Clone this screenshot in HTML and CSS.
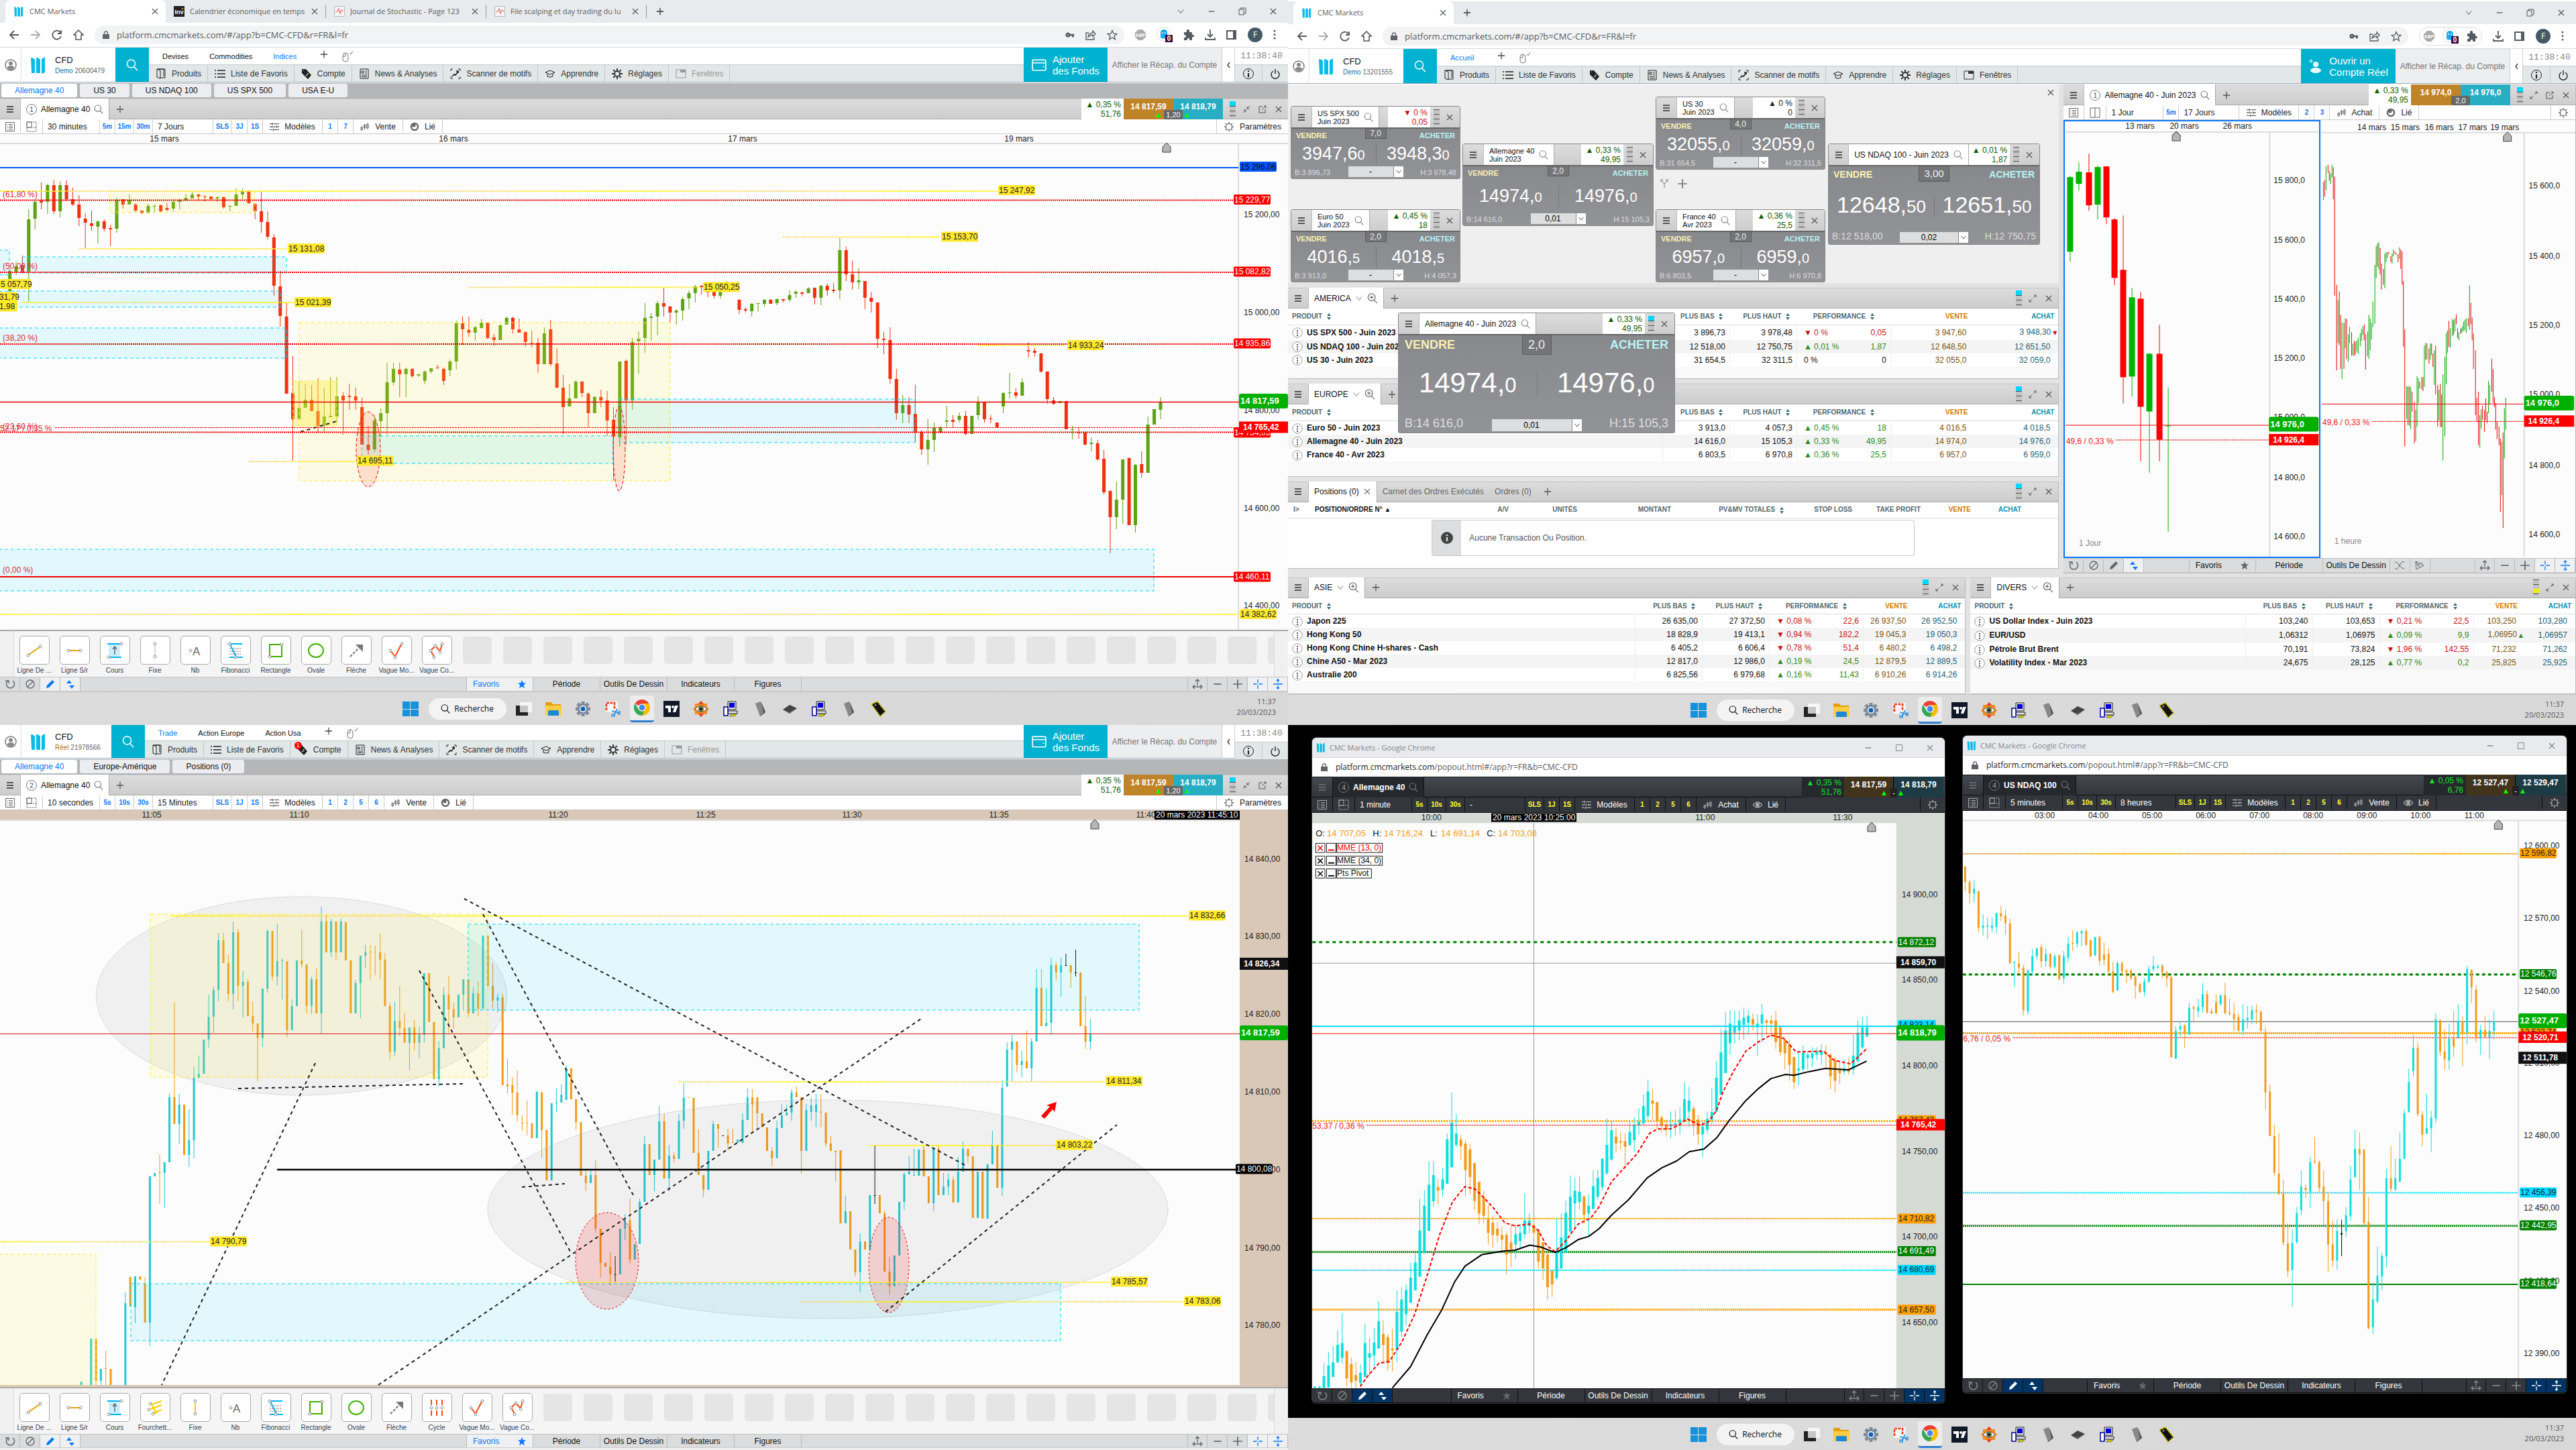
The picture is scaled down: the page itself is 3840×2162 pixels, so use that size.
FILE: index.html
```html
<!DOCTYPE html>
<html lang="fr">
<head>
<meta charset="utf-8">
<title>CMC Markets</title>
<link rel="stylesheet" href="styles.css">
</head>
<body>
<svg class="sprite" aria-hidden="true">
<symbol id="i-logo" viewBox="0 0 22 26"><path fill="#0bbbe8" d="M0 2q4 0 6 3v20H1zM8 2q4 0 6 3v20H8zM16 4l5-3v23l-5 2z"/></symbol>
<symbol id="i-user" viewBox="0 0 18 18"><circle cx="9" cy="9" r="8" fill="none" stroke="#777" stroke-width="1.5"/><circle cx="9" cy="6.500" r="3" fill="#888"/><path fill="#888" d="M3.500 13q1-3 5.500-3t5.500 3q-2 3-5.500 3t-5.500-3z"/></symbol>
<symbol id="i-search" viewBox="0 0 18 18"><path fill="none" stroke="currentColor" stroke-width="1.500" d="M12 12l5 5M13.500 7a6 6 0 1 1-12 0 6 6 0 0 1 12 0z"/></symbol>
<symbol id="i-zoomin" viewBox="0 0 18 18"><path fill="none" stroke="currentColor" stroke-width="1.500" d="M12 12l5 5M13.500 7a6 6 0 1 1-12 0 6 6 0 0 1 12 0zM4.500 7h6M7.500 4v6"/></symbol>
<symbol id="i-plus" viewBox="0 0 14 14"><path stroke="currentColor" stroke-width="1.500" d="M7 1v12M1 7h12"/></symbol>
<symbol id="i-minus" viewBox="0 0 14 14"><path stroke="currentColor" stroke-width="1.500" d="M2 7h10"/></symbol>
<symbol id="i-x" viewBox="0 0 12 12"><path stroke="currentColor" stroke-width="1.200" d="M2 2l8 8M10 2l-8 8"/></symbol>
<symbol id="i-mouse" viewBox="0 0 18 18"><path fill="none" stroke="#777" d="M2 8q0-4 4-4t4 4v5q0 4-4 4t-4-4zM6 4v5H2M12 4l2 2 3-5"/></symbol>
<symbol id="i-prod" viewBox="0 0 16 16"><path fill="none" stroke="#222" d="M2 1l5 2v12l-5-2zM2 1h10v11M4 1h10v13H7"/></symbol>
<symbol id="i-list" viewBox="0 0 16 14"><path stroke="#222" stroke-width="1.500" d="M4 2h12M4 7h12M4 12h12M0 2h2M0 7h2M0 12h2"/></symbol>
<symbol id="i-tag" viewBox="0 0 16 16"><path fill="#222" d="M1 1h6l8 9-5 6-9-9z"/><path stroke="#e2e7e7" fill="none" d="M11 8q-3-1-2 1t-2 2M3 3h1"/></symbol>
<symbol id="i-news" viewBox="0 0 14 16"><path fill="none" stroke="#222" d="M1 1h12v14H1zM3 4h3v3H3zM8 4h3M8 7h3M3 10h8M3 12.500h8"/></symbol>
<symbol id="i-scan" viewBox="0 0 16 16"><path fill="none" stroke="#222" d="M1 4V1h3M12 1h3v3M15 12v3h-3M4 15H1v-3"/><path fill="none" stroke="#222" stroke-width="1.600" d="M3 12l3-3 2 1 4-6M9 4h3v3"/></symbol>
<symbol id="i-grad" viewBox="0 0 16 14"><path fill="none" stroke="#222" d="M8 2l7 3-7 3-7-3zM4 7v4q4 2 8 0V7"/></symbol>
<symbol id="i-gear" viewBox="0 0 16 16"><circle cx="8" cy="8" r="4" fill="none" stroke="currentColor" stroke-width="2"/><path stroke="currentColor" stroke-width="2" d="M8 0v3M8 13v3M0 8h3M13 8h3M2.300 2.300l2 2M11.700 11.700l2 2M2.300 13.700l2-2M11.700 4.300l2-2"/></symbol>
<symbol id="i-gearo" viewBox="0 0 16 16"><circle cx="8" cy="8" r="4.500" fill="none" stroke="currentColor" stroke-width="1.200"/><path stroke="currentColor" stroke-width="1.600" d="M8 1v2M8 13v2M1 8h2M13 8h2M3 3l1.500 1.500M11.500 11.500L13 13M3 13l1.500-1.500M11.500 4.500L13 3"/></symbol>
<symbol id="i-win" viewBox="0 0 16 14"><path fill="none" stroke="currentColor" d="M1 1h14v12H1z"/><path fill="currentColor" d="M7 1h8v4H7z"/></symbol>
<symbol id="i-wallet" viewBox="0 0 20 16"><path fill="none" stroke="#fff" stroke-width="1.500" d="M1 2q0-1 1-1h16q1 0 1 1v12q0 1-1 1H2q-1 0-1-1zM1 5h18M15 10h2"/></symbol>
<symbol id="i-adduser" viewBox="0 0 20 22"><path fill="none" stroke="#fff" d="M3 0v6M0 3h6"/><circle cx="10" cy="8" r="4" fill="#e9fbff"/><ellipse cx="10" cy="17" rx="8" ry="4" fill="#e9fbff"/></symbol>
<symbol id="i-info" viewBox="0 0 18 18"><circle cx="9" cy="9" r="7.500" fill="none" stroke="#222"/><path stroke="#222" stroke-width="2.200" d="M9 8v6M9 4v2"/></symbol>
<symbol id="i-infob" viewBox="0 0 18 18"><circle cx="9" cy="9" r="9" fill="#444"/><path stroke="#ddd" stroke-width="2.400" d="M9 8v6M9 4v2.200"/></symbol>
<symbol id="i-power" viewBox="0 0 16 16"><path fill="none" stroke="#222" stroke-width="1.400" d="M5 4a6 6 0 1 0 6 0M8 1v7"/></symbol>
<symbol id="i-chev" viewBox="0 0 6 10"><path fill="none" stroke="#444" stroke-width="1.500" d="M5 1L2 5l3 4"/></symbol>
<symbol id="i-down" viewBox="0 0 12 12"><path fill="none" stroke="currentColor" d="M2 3.500l4 5 4-5"/></symbol>
<symbol id="i-burger" viewBox="0 0 12 12"><path stroke="currentColor" stroke-width="2" d="M1 2h10M1 6h10M1 10h10"/></symbol>
<symbol id="i-doc" viewBox="0 0 16 16"><path fill="none" stroke="currentColor" d="M1.500 1.500h13v13h-13zM6 4.500h6M6 7h6M6 9.500h6M6 12h6M3.500 4.500h1M3.500 7h1M3.500 9.500h1M3.500 12h1"/></symbol>
<symbol id="i-grid" viewBox="0 0 16 16"><path fill="none" stroke="currentColor" stroke-dasharray="2 1" d="M1 1h14v14H1zM1 9h14"/><path fill="none" stroke="currentColor" d="M1 1h7v8H1z"/></symbol>
<symbol id="i-split" viewBox="0 0 16 16"><path fill="none" stroke="currentColor" d="M1 1h14v14H1zM8 1v14"/></symbol>
<symbol id="i-sliders" viewBox="0 0 16 14"><path fill="none" stroke="currentColor" stroke-width="1.500" d="M0 2h5M7 2h9M0 7h9M11 7h5M0 12h4M6 12h10M5 0v4M11 5v4M6 10v4"/></symbol>
<symbol id="i-candle" viewBox="0 0 16 14"><path fill="none" stroke="currentColor" d="M1 8h3v4H1zM6 4h3v5H6zM11 3h3v6h-3zM2.500 6v8M7.500 2v10M12.500 0v12"/></symbol>
<symbol id="i-link" viewBox="0 0 14 14"><circle cx="7" cy="7" r="5" fill="none" stroke="currentColor" stroke-width="2.500"/><circle cx="6" cy="5" r="2.500" fill="currentColor"/></symbol>
<symbol id="i-eye" viewBox="0 0 14 14"><path fill="none" stroke="currentColor" stroke-width="1.300" d="M0 7q7-8 14 0-7 8-14 0z"/><circle cx="7" cy="7" r="3" fill="currentColor"/></symbol>
<symbol id="i-shrink" viewBox="0 0 12 12"><path fill="none" stroke="currentColor" d="M1 11l4-4M2 7h3v3M11 1L7 5M7 2v3h3"/></symbol>
<symbol id="i-expand" viewBox="0 0 12 12"><path fill="none" stroke="currentColor" d="M1 11l4-4M1 8v3h3M11 1L7 5M8 1h3v3"/></symbol>
<symbol id="i-pop" viewBox="0 0 12 12"><path fill="none" stroke="currentColor" d="M6 2H1v9h9V6M5 7l6-6M8 1h3v3"/></symbol>
<symbol id="i-fork" viewBox="0 0 14 14"><path fill="none" stroke="#777" d="M7 14V8L2 2M7 8l5-6M2 5V2h3M9 2h3v3"/></symbol>
<symbol id="i-undo" viewBox="0 0 16 16"><path fill="none" stroke="currentColor" stroke-width="1.500" d="M5 3a6 6 0 1 0 7 0M1 3h5v4"/></symbol>
<symbol id="i-no" viewBox="0 0 16 16"><circle cx="8" cy="8" r="6" fill="none" stroke="currentColor" stroke-width="1.300"/><path stroke="currentColor" stroke-width="1.300" d="M4 12l8-8"/></symbol>
<symbol id="i-pen" viewBox="0 0 16 16"><path fill="currentColor" d="M2 14l1-4 8-8 3 3-8 8z"/></symbol>
<symbol id="i-ud" viewBox="0 0 16 16"><path fill="currentColor" d="M2 7l4-5 4 5zM6 10h8l-4 5z"/></symbol>
<symbol id="i-star" viewBox="0 0 16 16"><path fill="currentColor" d="M8 1l2 5h5l-4 3.500 1.500 5.500L8 12l-4.500 3L5 9.500 1 6h5z"/></symbol>
<symbol id="i-hfit" viewBox="0 0 16 16"><path fill="none" stroke="currentColor" stroke-width="1.300" d="M8 1v9M5 4l3-3 3 3M2 12h12M4 9l-3 3 3 3M12 9l3 3-3 3"/></symbol>
<symbol id="i-cross" viewBox="0 0 16 16"><path stroke="currentColor" stroke-width="1.300" d="M8 1v5.500M8 9.500V15M1 8h5.500M9.500 8H15"/></symbol>
<symbol id="i-vfit" viewBox="0 0 16 16"><path fill="none" stroke="currentColor" stroke-width="1.300" d="M1 8h14M8 1v5M8 10v5M6 3l2-2 2 2M6 13l2 2 2-2"/></symbol>
<symbol id="i-wave" viewBox="0 0 16 16"><path fill="none" stroke="currentColor" d="M1 13q4 2 7-5t7-5M1 3q4 0 7 5t7 5"/></symbol>
<symbol id="i-tri" viewBox="0 0 16 16"><path fill="none" stroke="currentColor" d="M2 2l12 6L3 14zM2 2l6 9M4 8l8-4"/></symbol>
<symbol id="i-back" viewBox="0 0 16 16"><path fill="none" stroke="currentColor" stroke-width="1.800" d="M15 8H2M8 2L2 8l6 6"/></symbol>
<symbol id="i-fwd" viewBox="0 0 16 16"><path fill="none" stroke="#aaa" stroke-width="1.800" d="M1 8h13M8 2l6 6-6 6"/></symbol>
<symbol id="i-reload" viewBox="0 0 16 16"><path fill="none" stroke="currentColor" stroke-width="1.800" d="M13.500 5A6.500 6.500 0 1 0 14 10M14 1v5H9"/></symbol>
<symbol id="i-home" viewBox="0 0 16 16"><path fill="none" stroke="currentColor" stroke-width="1.600" d="M1 8l7-7 7 7h-3v7H4V8z"/></symbol>
<symbol id="i-lock" viewBox="0 0 10 12"><path fill="#5f6368" d="M0 5h10v7H0z"/><path fill="none" stroke="#5f6368" stroke-width="1.400" d="M2.500 5V3q0-2 2.500-2t2.500 2v2"/></symbol>
<symbol id="i-key" viewBox="0 0 16 10"><path fill="none" stroke="currentColor" stroke-width="3" d="M2 5a2.500 2.500 0 1 1 5 0 2.500 2.500 0 1 1-5 0M7 5h8M13 5v4"/></symbol>
<symbol id="i-share" viewBox="0 0 16 16"><path fill="none" stroke="currentColor" stroke-width="1.300" d="M5 5H1v10h12v-4M4 11q1-6 7-6V2l4 4.500-4 4V8q-4 0-7 3z"/></symbol>
<symbol id="i-staro" viewBox="0 0 16 16"><path fill="none" stroke="currentColor" stroke-width="1.300" d="M8 1.500l2 4.700 5 .3-4 3.200 1.300 5L8 12l-4.300 2.700L5 9.700 1 6.500l5-.3z"/></symbol>
<symbol id="i-abp" viewBox="0 0 16 16"><path fill="#aaa" d="M5 0h6l5 5v6l-5 5H5l-5-5V5z"/><text x="8" y="10.500" font-size="7" font-weight="700" fill="#fff" text-anchor="middle" font-family="Liberation Sans">ABP</text></symbol>
<symbol id="i-ghost" viewBox="0 0 24 24"><circle cx="11" cy="11" r="10.500" fill="#fff" stroke="#ddd"/><path fill="#1ba8f0" d="M6 17V9q0-5 5-5t5 5v8l-2-1-1 2-2-1-2 1-1-2z"/><circle cx="9" cy="9" r="1" fill="#fff"/><circle cx="13" cy="9" r="1" fill="#fff"/><path fill="#3d0a3c" d="M13 12h11v11H13z"/><text x="18.500" y="21" font-size="10" font-weight="700" fill="#fff" text-anchor="middle" font-family="Liberation Sans">0</text></symbol>
<symbol id="i-puzzle" viewBox="0 0 16 16"><path fill="currentColor" d="M1 4h4q-1-4 2-4t2 4h4v4q3-1 3 1.500T13 11v5H9q1-3-1.500-3T6 16H1v-4q3 0 3-2T1 8z"/></symbol>
<symbol id="i-dl" viewBox="0 0 16 16"><path fill="none" stroke="currentColor" stroke-width="1.800" d="M8 0v10M4 7l4 4 4-4M1 12v3h14v-3"/></symbol>
<symbol id="i-side" viewBox="0 0 16 16"><path fill="none" stroke="currentColor" stroke-width="2" d="M1 2h13v12H1z"/><path fill="currentColor" d="M10 2h4v12h-4z"/></symbol>
<symbol id="i-f" viewBox="0 0 22 22"><circle cx="11" cy="11" r="11" fill="#455a64"/><text x="11" y="15" font-size="12" fill="#fff" text-anchor="middle" font-family="Open Sans">F</text></symbol>
<symbol id="i-dots" viewBox="0 0 4 16"><circle cx="2" cy="2" r="1.500" fill="currentColor"/><circle cx="2" cy="7.500" r="1.500" fill="currentColor"/><circle cx="2" cy="13" r="1.500" fill="currentColor"/></symbol>
<symbol id="i-rest" viewBox="0 0 12 12"><path fill="none" stroke="currentColor" d="M1 3h7v8H1zM3 3V1h8v8H8"/></symbol>
<symbol id="i-max" viewBox="0 0 12 12"><path fill="none" stroke="currentColor" d="M1.500 1.500h9v9h-9z"/></symbol>
<symbol id="i-inv" viewBox="0 0 16 16"><path fill="#222" d="M0 0h16v16H0z"/><text x="8" y="12" font-size="9" font-weight="700" fill="#fff" text-anchor="middle" font-family="Liberation Sans">Inv</text><circle cx="13" cy="4" r="1.200" fill="#f90"/></symbol>
<symbol id="i-pulse" viewBox="0 0 16 16"><path fill="#f4f4f4" stroke="#bbb" d="M.5.5h15v15H.5z"/><path fill="none" stroke="#e77" stroke-width="1.300" d="M2 9l3-1 2-4 2 7 2-5 3 2"/></symbol>
<symbol id="i-sort" viewBox="0 0 6 10"><path fill="#3a6a72" d="M0 4l3-4 3 4zM0 6h6L3 10z"/></symbol>
<symbol id="i-row" viewBox="0 0 16 16"><circle cx="8" cy="8" r="7.200" fill="#fff" stroke="#999"/><path stroke="#555" stroke-width="2" stroke-dasharray="2 1.500" d="M8 4v9"/></symbol>
<symbol id="t-line" viewBox="0 0 26 26"><path stroke="#e2a400" stroke-width="2" d="M5 19L21 8"/><circle cx="4" cy="20" r="2" fill="#fff" stroke="#888"/><circle cx="22" cy="7" r="2" fill="#fff" stroke="#888"/></symbol>
<symbol id="t-hline" viewBox="0 0 26 26"><path stroke="#e2a400" stroke-width="2" d="M6 13h14"/><circle cx="4" cy="13" r="2" fill="#fff" stroke="#888"/><circle cx="22" cy="13" r="2" fill="#fff" stroke="#888"/></symbol>
<symbol id="t-cours" viewBox="0 0 26 26"><path fill="#ccefff" d="M4 4h17v18H4z"/><path stroke="#00b4ff" stroke-width="2" d="M2 3h20M3 23h20"/><path fill="none" stroke="#666" stroke-width="1.500" d="M13 19V8M10 11l3-4 3 4"/><circle cx="23" cy="3" r="2" fill="#fff" stroke="#888"/><circle cx="4" cy="23" r="2" fill="#fff" stroke="#888"/></symbol>
<symbol id="t-fourch" viewBox="0 0 26 26"><path stroke="#ffcf00" stroke-width="2" d="M8 8l15-5M6 15l17-6M10 21l13-5M8 8l8 14"/><circle cx="6" cy="7" r="2" fill="#fff" stroke="#888"/><circle cx="4" cy="16" r="2" fill="#fff" stroke="#888"/><circle cx="10" cy="22" r="2" fill="#fff" stroke="#888"/></symbol>
<symbol id="t-fixe" viewBox="0 0 26 26"><path stroke="#bbb" stroke-width="1" d="M13 6v14"/><circle cx="13" cy="3" r="2" fill="#fff" stroke="#888"/><circle cx="13" cy="22" r="2" fill="#fff" stroke="#888"/></symbol>
<symbol id="t-fixey" viewBox="0 0 26 26"><path stroke="#ffcf00" stroke-width="2" d="M13 6v14"/><circle cx="13" cy="3" r="2" fill="#fff" stroke="#888"/><circle cx="13" cy="22" r="2" fill="#fff" stroke="#888"/></symbol>
<symbol id="t-nb" viewBox="0 0 26 26"><circle cx="6" cy="13" r="2" fill="#fff" stroke="#888"/><text x="9" y="20" font-size="17" fill="#666" font-family="Liberation Sans">A</text></symbol>
<symbol id="t-fib" viewBox="0 0 26 26"><path stroke="#00b4ff" stroke-width="2" d="M2 3h21M4 23h20M5 4l9 18"/><path stroke="#777" stroke-dasharray="2 1" d="M4 10h18M4 14h18M4 18h18"/><circle cx="4" cy="3" r="2" fill="#fff" stroke="#888"/><circle cx="13" cy="23" r="2" fill="#fff" stroke="#888"/></symbol>
<symbol id="t-rect" viewBox="0 0 26 26"><path fill="none" stroke="#3faf00" stroke-width="2" d="M4 4h18v18H4z"/><circle cx="22" cy="4" r="2" fill="#fff" stroke="#888"/><circle cx="4" cy="22" r="2" fill="#fff" stroke="#888"/></symbol>
<symbol id="t-oval" viewBox="0 0 26 26"><ellipse cx="13" cy="13" rx="11" ry="10" fill="none" stroke="#3faf00" stroke-width="2"/></symbol>
<symbol id="t-fleche" viewBox="0 0 26 26"><path stroke="#777" stroke-width="2" stroke-dasharray="4 2" d="M4 22L18 8"/><path fill="#777" d="M12 4h11v11z"/></symbol>
<symbol id="t-cycle" viewBox="0 0 26 26"><path stroke="#f44a18" stroke-width="2" d="M5 1v8M13 1v8M21 1v8M5 17v8M13 17v8M21 17v8"/><g fill="#fff" stroke="#888"><circle cx="5" cy="13" r="2"/><circle cx="13" cy="13" r="2"/><circle cx="21" cy="13" r="2"/></g></symbol>
<symbol id="t-vague" viewBox="0 0 26 26"><path fill="none" stroke="#f44a18" stroke-width="2" d="M4 13l7 9L20 4"/><g fill="#fff" stroke="#888"><circle cx="4" cy="13" r="2"/><circle cx="11" cy="23" r="2"/><circle cx="21" cy="3" r="2"/></g></symbol>
<symbol id="t-vagueco" viewBox="0 0 26 26"><path fill="none" stroke="#f44a18" stroke-width="2" d="M9 22L4 13l7-7 7 8 3-11"/><g fill="#fff" stroke="#888"><circle cx="9" cy="23" r="2"/><circle cx="4" cy="13" r="2"/><circle cx="11" cy="6" r="2"/><circle cx="18" cy="15" r="2"/><circle cx="21" cy="3" r="2"/></g></symbol>
<symbol id="k-win" viewBox="0 0 24 24"><path fill="#1592dc" d="M0 1h11v11H0zM12 1h12v11H12zM0 13h11v10H0zM12 13h12v10H12z"/></symbol>
<symbol id="k-view" viewBox="0 0 24 24"><path fill="#222" d="M0 7h18v15H0z"/><path fill="#fff" opacity=".75" d="M6 2h18v15H6z"/></symbol>
<symbol id="k-folder" viewBox="0 0 24 24"><path fill="#e5a00d" d="M0 2h9l2 3h12v5H0z"/><path fill="#ffcd42" d="M0 7h24v15H0z"/><path fill="#1e88d8" d="M4 16q0-2 2-2h12q2 0 2 2v6H4z"/></symbol>
<symbol id="k-set" viewBox="0 0 24 24"><circle cx="12" cy="12" r="8" fill="#7d8a99"/><path stroke="#7d8a99" stroke-width="5" d="M12 1v22M1 12h22M4 4l16 16M20 4L4 20"/><circle cx="12" cy="12" r="5" fill="#fff"/><circle cx="12" cy="12" r="3.500" fill="#0c60b5"/></symbol>
<symbol id="k-snip" viewBox="0 0 24 24"><path fill="#f5f5f5" d="M2 1h18v16H2z"/><path fill="none" stroke="#e0401a" stroke-width="2.500" stroke-dasharray="4 1.500" d="M3 14V3h12v9"/><path stroke="#2a8fdc" stroke-width="1.800" d="M14 22l5-10M22 18l-11-3"/><circle cx="13" cy="22" r="2" fill="none" stroke="#2a8fdc" stroke-width="1.500"/><circle cx="22" cy="18" r="2" fill="none" stroke="#2a8fdc" stroke-width="1.500"/></symbol>
<symbol id="k-chrome" viewBox="0 0 24 24"><path fill="#ea4335" d="M12 12L1.600 6a12 12 0 0 1 20.800 0z"/><path fill="#fbbc05" d="M12 12h10V6.500A12 12 0 0 1 12 24z"/><path fill="#fbbc05" d="M12 6h10.400A12 12 0 0 1 12 24l5-9z"/><path fill="#34a853" d="M12 24A12 12 0 0 1 1.600 6L7 15l8 3z"/><circle cx="12" cy="12" r="5.600" fill="#fff"/><circle cx="12" cy="12" r="4.400" fill="#4285f4"/></symbol>
<symbol id="k-tv" viewBox="0 0 24 24"><path fill="#111827" d="M0 0h24v24H0z"/><path fill="#fff" d="M3 7h8v10H7v-6H3zM17 7h5l-4 10h-4z"/><circle cx="14" cy="9" r="2" fill="#fff"/></symbol>
<symbol id="k-eye" viewBox="0 0 24 24"><path fill="#f48b1e" d="M12 0l4 4h5v5l3 3-3 4v4h-5l-4 4-4-4H3v-4l-3-4 3-3V4h5z"/><path fill="#e0432a" d="M12 0l4 5H8zM12 24l4-5H8z"/><path fill="#fff" stroke="#555" d="M3 12q9-9 18 0-9 9-18 0z"/><circle cx="12" cy="12" r="4" fill="#5c6b3a"/><circle cx="12" cy="12" r="1.500"/></symbol>
<symbol id="k-pc" viewBox="0 0 24 24"><path fill="#ddd" stroke="#222" d="M8 1h12v12H8zM8 15h14v4H8z"/><path fill="#0000d0" d="M10 3h8v7h-8z"/><path fill="#fff" stroke="#0000a0" stroke-width="1.500" d="M2 9h6v13H2z"/><path fill="#dd0" stroke="#222" stroke-width=".5" d="M13 20h8l-3 3h-7z"/></symbol>
<symbol id="k-chip" viewBox="0 0 24 24"><path fill="#888" stroke="#aaa" stroke-dasharray="2 1" d="M5 4l8-3 7 16-8 6z"/><path fill="#555" d="M14 2l6 15-8 6 1-2 4-3z"/></symbol>
<symbol id="k-chipd" viewBox="0 0 24 24"><path fill="#444" d="M2 13L12 6l11 5-11 8z"/><path fill="#777" d="M2 13l10 4 11-6-11 8z"/></symbol>
<symbol id="k-ibm" viewBox="0 0 24 24"><path fill="#111" stroke="#d8c800" stroke-width="2" stroke-dasharray="2 1.500" d="M2 5l9-4 12 15-8 7z"/><circle cx="8" cy="6" r="1.500" fill="#888"/></symbol>
</svg>

<main class="wall">
  <section class="screen">
    <div data-part="tabs" data-tabs="full"></div>
    <div data-part="url"></div>
    <div data-part="header" data-sub="Demo 20600479" data-nav="Devises|Commodities|*Indices" data-action="fonds" data-variant="wide"></div>
    <nav class="views"><button class="on">Allemagne 40</button><button>US 30</button><button>US NDAQ 100</button><button>US SPX 500</button><button>USA E-U</button></nav>
    <div data-part="chart" data-num="1" data-name="Allemagne 40" data-period="30 minutes" data-p="5m|15m|30m" data-span="7 Jours" data-s="SLS|3J|1S" data-m="1|7" data-side="Vente" data-settings="Paramètres" data-quote="0,35 %|51,76|14 817,59|14 818,79|1,20"></div>
    <svg class="plot" id="dax30" viewBox="0 200 1920 739"></svg>
    <div data-part="tools" data-set="a"></div>
    <div data-part="foot" data-live="1"></div>
    <div data-part="taskbar"></div>
  </section>

  <section class="screen second">
    <div data-part="tabs" data-tabs="one"></div>
    <div data-part="url" data-pill="1"></div>
    <div data-part="header" data-sub="Demo 13201555" data-nav="*Accueil" data-action="compte" data-windows="on"></div>
    <div class="workspace">
      <div class="upper">
        <div class="left">
          <div class="canvas" id="canvas">
            <button class="closer" aria-label="Fermer"><svg class="i12"><use href="#i-x"/></svg></button>
            <div class="adders"><svg class="i14"><use href="#i-fork"/></svg><svg class="i16"><use href="#i-plus"/></svg></div>
          </div>
          <section class="panel" data-list="AMERICA" id="america"></section>
          <section class="panel" data-list="EUROPE" id="europe"></section>
          <section class="panel positions">
            <header class="phead"><button class="burger" aria-label="Menu"><svg class="i12"><use href="#i-burger"/></svg></button><button class="ptab on">Positions (0) <svg class="i12"><use href="#i-x"/></svg></button><button class="ptab">Carnet des Ordres Exécutés</button><button class="ptab">Ordres (0)</button><button class="padd" aria-label="Ajouter"><svg class="i12"><use href="#i-plus"/></svg></button><span class="grow"></span><span class="bars"></span><svg class="i12"><use href="#i-expand"/></svg><svg class="i12"><use href="#i-x"/></svg></header>
            <table class="orders"><thead><tr><th class="k1">I&gt;</th><th class="k2">POSITION/ORDRE N° ▲</th><th class="k3">A/V</th><th class="k4">UNITÉS</th><th class="k5">MONTANT</th><th class="k6">PV&amp;MV TOTALES <svg class="sort"><use href="#i-sort"/></svg></th><th class="k7">STOP LOSS</th><th class="k7">TAKE PROFIT</th><th class="k8 sell">VENTE</th><th class="k8 buy">ACHAT</th><th></th></tr></thead></table>
            <p class="empty"><span><svg class="i18"><use href="#i-infob"/></svg></span>Aucune Transaction Ou Position.</p>
          </section>
          <div id="floating"></div>
        </div>
        <section class="panel duo">
          <div data-part="chart" data-num="1" data-name="Allemagne 40 - Juin 2023" data-period="1 Jour" data-p="5m" data-span="17 Jours" data-m="2|3" data-side="Achat" data-settings="" data-split="1" data-quote="0,33 %|49,95|14 974,0|14 976,0|2,0"></div>
          <div class="pair"><svg class="plot sel" id="day" viewBox="3079 181 376 648"></svg><svg class="plot" id="hour" viewBox="3460 180 380 652"></svg></div>
          <div data-part="foot" data-short="1"></div>
        </section>
      </div>
      <div class="lower">
        <section class="panel asie" data-list="ASIE" id="asie"></section>
        <section class="panel divers" data-list="DIVERS" id="divers"></section>
      </div>
    </div>
    <div data-part="taskbar"></div>
  </section>

  <section class="screen third">
    <div data-part="header" data-sub="Réel 21978566" data-nav="*Trade|Action Europe|Action Usa" data-action="fonds" data-variant="real"></div>
    <nav class="views"><button class="on">Allemagne 40</button><button>Europe-Amérique</button><button>Positions (0)</button></nav>
    <div data-part="chart" data-num="2" data-name="Allemagne 40" data-period="10 secondes" data-p="5s|10s|30s" data-span="15 Minutes" data-s="SLS|1J|1S" data-m="1|2|5|6" data-side="Vente" data-settings="Paramètres" data-quote="0,35 %|51,76|14 817,59|14 818,79|1,20"></div>
    <svg class="plot" id="dax10s" viewBox="0 1208 1920 860"></svg>
    <div data-part="tools" data-set="b"></div>
    <div data-part="foot" data-live="1"></div>
  </section>

  <section class="screen fourth">
    <div class="desktop">
      <article class="window w-dax">
        <div data-part="popout"></div>
        <div data-part="chart" data-dark="1" data-num="4" data-name="Allemagne 40" data-period="1 minute" data-p="5s|10s|30s" data-span="-" data-s="SLS|1J|1S" data-m="1|2|5|6" data-side="Achat" data-settings="" data-quote="0,35 %|51,76|14 817,59|14 818,79|-"></div>
        <svg class="plot" id="dax1m" viewBox="1956 1213 943 857"></svg>
        <div data-part="foot"></div>
      </article>
      <article class="window w-ndaq">
        <div data-part="popout"></div>
        <div data-part="chart" data-dark="1" data-num="4" data-name="US NDAQ 100" data-period="5 minutes" data-p="5s|10s|30s" data-span="8 heures" data-s="SLS|1J|1S" data-m="1|2|5|6" data-side="Vente" data-settings="" data-quote="0,05 %|6,76|12 527,47|12 529,47|-"></div>
        <svg class="plot" id="ndaq5m" viewBox="2926 1209 900 846"></svg>
        <div data-part="foot"></div>
      </article>
    </div>
    <div data-part="taskbar"></div>
  </section>
</main>
<script src="app.js"></script>
</body>
</html>
```

FILE: styles.css
```css
*{box-sizing:border-box}
html,body{margin:0;height:100%}
body{font:12px/14px "Liberation Sans",Arial,sans-serif;color:#111;background:#fff}
button{font:inherit;color:inherit;background:none;border:0;padding:0;margin:0;display:flex;align-items:center;justify-content:center;white-space:nowrap}
input,select{font:inherit;border:0;margin:0;padding:0;min-width:0}
a{color:inherit;text-decoration:none}
svg{flex:none;display:block}
table{border-collapse:collapse;border-spacing:0}
.sprite{position:absolute;width:0;height:0}
.grow{flex:1}
.i10{width:10px;height:10px}.i12{width:12px;height:12px}.i14{width:14px;height:14px}.i16{width:16px;height:16px}.i18{width:18px;height:18px}.i22{width:22px;height:22px}.i24{width:24px;height:24px}.i26{width:26px;height:26px}
.wall{display:grid;grid-template:1fr 1fr/1fr 1fr;height:100vh}
.screen{display:flex;flex-direction:column;min-width:0;min-height:0;overflow:hidden;background:#fff}
.second{border-top:2px solid #fff}
.third{padding-bottom:3px;background:#f0f0f0}
.fourth{background:#000}

/* browser */
.tabs{display:flex;height:34px;background:#e8eaed;padding-left:8px;font:11px/34px "Open Sans","Noto Sans",sans-serif;color:#5a5d61;align-items:center}
.tab{display:flex;align-items:center;width:239px;height:34px;padding:0 10px 0 12px;gap:8px;border-right:1px solid #999}
.tab:not(.on){height:20px}
.tab.on{background:#fff;border:0;border-radius:8px 8px 0 0}
.tab span{flex:1;overflow:hidden;white-space:nowrap}
.tabs .new{margin-left:14px;color:#333}
.tabs .ctl{display:flex;gap:34px;padding-right:16px;color:#555}
.url{display:flex;align-items:center;height:37px;padding:0 18px 0 13px;gap:16px;border-bottom:1px solid #d5d7da;color:#555a5f;font:14px/28px "Open Sans","Noto Sans",sans-serif}
.url .omni{flex:1;display:flex;align-items:center;height:28px;border-radius:14px;background:#f1f3f4;padding:0 10px 0 12px;gap:16px}
.omni svg:first-child{width:10px;height:12px;margin-right:-5px}
.url input{flex:1;background:none;color:#5a5d61;font:13px/28px "Open Sans","Noto Sans",sans-serif}
.url .ext{display:flex;align-items:center;gap:16px;height:28px;border-radius:14px}
.url .ext.pill{border:1px solid #ddd;padding:0 6px;gap:12px}
.url .dots{width:4px;height:16px}

/* platform header */
.head{display:flex;height:53px;border-bottom:2px solid #fff;background:#fff}
.third .head{height:51px;border-bottom-width:1px}
.head>*{border-bottom:1px solid #97a9b8;height:52px}
.third .head>*{height:50px}
.me{width:32px;display:flex;align-items:center;justify-content:center;border-right:1px solid #ddd}
.brand{width:140px;display:flex;align-items:center;gap:14px;padding-left:14px}
.third .brand{width:134px}
.brand>svg{width:22px;height:26px}
.brand b{display:block;font:13px/16px "Liberation Sans",Arial,sans-serif}
.brand small{font-size:10px;line-height:13px;color:#16709a;white-space:nowrap}
.brand small i{font-style:normal;color:#666}
.third .brand small{color:#a8730e}
.find{width:50px;background:#00b2cf;color:#fff}
.mid{flex:1;display:flex;flex-direction:column;min-width:0}
.nav{flex:1;display:flex;align-items:center;gap:31px;padding-left:20px;font-size:11px}
.nav .on{color:#0a78ff}
.nav .tail{display:flex;gap:20px;margin-left:4px;color:#444}
.menu{display:flex;height:26px;background:#e2e7e7;border-top:1px solid #c6cbcc}
.menu button{padding:0 9px 0 10px;gap:8px;border-right:1px solid #c3c9ca;color:#333;position:relative}
.menu .off{color:#999}
.badge{position:absolute;left:6px;top:1px;width:11px;height:11px;border-radius:6px;background:red;color:#fff;font-size:9px;line-height:11px;text-align:center}
.cta{width:125px;background:#00b2cf;color:#fff;gap:9px;font-size:15px;line-height:17px;text-align:left}
.cta.real{width:141px}
.recap{width:171px;background:#eceef0;color:#777;border-right:1px solid #ccc}
.fold{width:19px;border-right:1px solid #ccc}
.clock{width:79px;display:grid;grid-template:1fr 26px/1fr 1fr}
.clock time{grid-column:1/3;font:13px/25px "Liberation Mono",monospace;color:#888;text-align:center}
.clock button{background:#e2e7e7;border-top:1px solid #c6cbcc}
.clock button+button{border-left:1px solid #c6cbcc}
.views{display:flex;gap:4px;height:23px;padding:1px 2px 2px;background:#b5b6b8;align-items:center}
.views button{height:20px;padding:0 20px;background:#ecedf0;border-radius:3px}
.views .on{background:#fff;color:#0a78ff}

/* panels */
.phead{display:flex;flex:none;align-items:center;height:31px;background:linear-gradient(#dcdcdc,#cdcdcd);border-bottom:1px solid #aaa;border-top:1px solid #c4c4c4;color:#555;padding-right:8px;gap:10px}
.phead>svg+svg{margin-left:2px}
.burger{width:31px;height:30px;border-right:1px solid #bbb;margin-right:-10px}
.ptab{height:31px;padding:0 8px;gap:6px;color:#666}
.ptab.on{background:#fff;color:#111;border-right:1px solid #aaa}
.ptab.on svg{color:#777}
.positions .ptab+.ptab{margin-left:-10px}
.ptab i{font-style:normal;width:16px;height:16px;border:1px solid #777;border-radius:8px;font-size:11px;line-height:14px;text-align:center;color:#555}
.bars{width:9px;height:24px;background:linear-gradient(#00d8ff 7px,transparent 7px),repeating-linear-gradient(#555 0 1px,#c4c4c4 1px 7px)}
.canvas .bars{background:repeating-linear-gradient(#555 0 1px,#c4c4c4 1px 7px)}
.divers .bars{background:linear-gradient(transparent 14px,#f2ee00 14px 20px,transparent 20px),repeating-linear-gradient(#555 0 1px,#c4c4c4 1px 7px)}
.chg{display:flex;flex-direction:column;align-items:flex-end;justify-content:center;height:31px;background:#fff;color:#145c00;padding:0 4px;width:63px;margin-right:-10px;line-height:14px}
.chg.dn{color:#c4141b}.chg.flat{color:#222}
.px{display:flex;height:31px;color:#fff;font-weight:700;position:relative}
.px button{width:74px;padding-bottom:8px;font-weight:700}
.px button:first-child{background:#c08428}
.px button+button{background:#27aec3}
.px span{position:absolute;left:60px;bottom:0;width:28px;height:14px;background:#666;border-radius:2px;font-size:11px;line-height:14px;text-align:center;font-weight:400}
.px em{position:absolute;bottom:1px;left:48px;font:9px/12px "DejaVu Sans",sans-serif;color:#0f0}
.px em+em{left:91px}
.ctool{display:flex;height:22px;background:#fff;border-bottom:1px solid #c8c8c8}
.ctool button{border-right:1px solid #ccc;gap:8px;height:21px;color:#222}
.ctool svg{color:#666}
.ctool .s{width:23px;font-size:10px;font-weight:700;color:#0a78ff}
.ctool .s.m{width:28px}
.ctool .doc{width:31px}.ctool .gr{width:33px}
.ctool .per{width:85px;justify-content:flex-start;padding-left:7px}
.ctool .span{width:90px;justify-content:flex-start;padding-left:7px}
.ctool .mod{width:89px}.ctool .side{width:74px}.ctool .lnk{width:59px}
.ctool .set{border-right:0;border-left:1px solid #ccc;padding:0 10px}
.plot{flex:1 1 0;min-height:0;width:100%;background:#fcfcfc}
.plot text{font-family:"Liberation Sans",Arial,sans-serif;font-size:12px}

/* drawing tools */
.tools{display:flex;height:70px;border-top:2px solid #aaa;background:#f0f0f0;padding:0 20px}
.tools ul{display:flex;flex:1;margin:0;padding:7px 0 0;list-style:none;border:solid #ddd;border-width:0 1px;overflow:hidden;background:#f5f5f5}
.tools li{flex:none;width:60px;display:flex;flex-direction:column;align-items:center;gap:2px;font-size:10px;color:#345;white-space:nowrap}
.tools li button{width:45px;height:43px;border:1px solid #aaa;border-radius:5px;background:#fff}
.tools li.none i{width:43px;height:41px;margin-top:1px;border-radius:5px;background:#e5e5e5}
.foot{display:flex;height:22px;background:#dadcde;border-top:1px solid #c4c4c4;color:#666;border-bottom:1px solid #ccc}
.third .foot{height:21px}
.foot button{width:30px;border-right:1px solid #bbb}
.foot .wide{width:100px;color:#111}
.foot .wide.fav{justify-content:space-between;padding:0 9px}
.foot .wide.fav svg{color:#666}
.foot .lit{background:#eef0f2;color:#0a78ff}
.foot .live{background:#eef0f2;color:#0a78ff}
.foot .live svg{color:#0a78ff!important}
.foot .edge{border-left:1px solid #bbb}
.taskbar{display:flex;align-items:center;justify-content:center;height:50px;background:linear-gradient(100deg,#dcdcdc,#d8d8d8);border-top:1px solid #c8c8c8;position:relative}
.second .taskbar{height:46px}.fourth .taskbar{height:48px}
.taskbar button{width:44px;height:32px}
.taskbar .sq{width:116px;border-radius:16px;background:#f3f3f3;font:12px/16px "Open Sans",sans-serif;gap:6px;margin:0 4px 0 5px}
.taskbar .cur{background:#ececec;border-radius:4px;width:36px;height:40px;margin:0 4px;border-bottom:3px solid #2f7fd0}
.taskbar p{position:absolute;right:18px;top:6px;margin:0;text-align:right;font:11px/16px "Open Sans",sans-serif;color:#555}

/* workspace */
.workspace{flex:1;display:flex;flex-direction:column;gap:6px;background:#e3e3e3;min-height:0}
.upper{display:flex;gap:7px;flex:728 1 0;min-height:0}
.lower{display:flex;gap:7px;flex:174 1 0;min-height:0}
.left{flex:1150 1 0;display:flex;flex-direction:column;gap:7px;position:relative;min-width:0}
.duo{flex:763 1 0;display:flex;flex-direction:column;min-width:0}
.canvas{flex:300 1 0;background:#efefef;position:relative}
.closer{position:absolute;right:6px;top:6px;color:#555}
.adders{position:absolute;left:554px;top:140px;display:flex;gap:12px;color:#777}
.panel{background:#f9f9f9;display:flex;flex-direction:column;min-height:0;border-right:1px solid #bbb;border-bottom:1px solid #bbb}
#america{flex:137 1 0}#europe{flex:139 1 0}.positions{flex:131 1 0}
.asie{flex:1010 1 0}.divers{flex:902 1 0}
.pair{flex:1;display:flex;gap:2px;min-height:0;background:#f2f2f2}
.pair .sel{border:2px solid #0a78ff;background:#fcfcfc}
.list{width:100%;table-layout:fixed;background:#fff}
.list th{font-size:10px;line-height:22px;height:24px;color:#52686c;text-align:right;padding:0 10px;border-bottom:1px solid #ddd;font-weight:700;white-space:nowrap}
.list th svg,.orders th svg{display:inline-block;vertical-align:middle}
.sort{width:6px;height:10px;margin-left:4px}
.list th:first-child{text-align:left;padding-left:6px}
.list th.mid3{text-align:center}
.list th.sell,.orders .sell{color:#d17b00}.list th.buy,.orders .buy{color:#0d93b5}
.list th.buy{padding-right:6px}
.list td{height:20px;padding:0 6px;text-align:right;border-right:1px solid #eee;line-height:20px;white-space:nowrap}
.list td:nth-child(5),.list td:nth-child(6){padding-right:12px;border:0}
.list td:nth-child(5){color:#7b5410}.list td:nth-child(6){color:#1e6375}
.list tr:nth-child(even) td{background:#f4f4f4}
.list td:first-child{font-weight:700;text-align:left}
.list td:first-child svg{display:inline-block;vertical-align:middle;margin-right:6px}
.list td>div{display:flex;justify-content:space-between;padding-left:4px}
.list td em{font:8px/20px "DejaVu Sans",sans-serif;margin:0 -10px 0 3px}
.up{color:#2e8b17}.dn{color:#c4141b}
.c-n{width:100px}.c-p{width:140px}.c-q{width:125px}
.asie .c-q,.divers .c-q{width:76px}
.orders{width:100%;table-layout:fixed;background:#fff}
.orders th{font-size:10px;line-height:22px;height:24px;color:#52686c;text-align:right;padding:0 9px 0 0;border-bottom:1px solid #ddd;white-space:nowrap}
.orders .k1{width:40px;text-align:left;padding-left:8px}.orders .k2{width:268px;text-align:left;color:#111}.orders .k3{width:30px}.orders .k4{width:102px}.orders .k5{width:140px}.orders .k6{width:168px}.orders .k7{width:102px}.orders .k8{width:75px}
.positions{background:#fff}
.empty{display:flex;flex:none;align-items:center;margin:2px auto 0;width:720px;height:54px;border:1px solid #c8c8c8;border-radius:3px;color:#555;gap:12px}
.empty span{width:43px;height:52px;background:#dcdee0;display:flex;align-items:center;justify-content:center}

/* price tickets */
.ticket{position:absolute;display:flex;flex-direction:column;border:1px solid #888;border-radius:3px;background:#8c8d90}
.ticket header{display:flex;height:31px;background:linear-gradient(#dcdcdc,#cdcdcd);align-items:center;color:#555}
.ticket .burger{margin:0}
.ticket .nm{height:31px;background:#fff;color:#111;padding:0 8px;font-size:11px;line-height:12px;gap:7px;text-align:left;border-right:1px solid #aaa}
.ticket .nm svg{color:#888}
.ticket .chg{margin:0 5px 0 0;height:31px}
.ticket header>svg{margin:0 9px}
.ticket .body{flex:1;display:grid;grid-template:auto 1fr auto/1fr 1fr;color:#fff;position:relative;border-top:2px solid #666;background:linear-gradient(#88898c,#929396)}
.ticket .v,.ticket .a{font-size:11px;line-height:20px;font-weight:700;padding:0 7px;color:#fbf0b4}
.ticket .a{text-align:right;color:#b9f4f6}
.ticket .p{font-size:27px;line-height:30px;display:flex;align-items:baseline;justify-content:center;align-self:center}
.ticket .p+.p{border-left:1px solid #777}
.ticket .p small{font-size:20px}
.ticket .b,.ticket .h{font-size:11px;line-height:18px;color:#ddd;padding:0 5px}
.ticket .h{text-align:right}
.ticket .sp{position:absolute;left:50%;top:-1px;width:32px;margin-left:-16px;background:#747578;border:1px solid #5c5d60;font-size:12px;line-height:14px;text-align:center;color:#eee}
.ticket .qty{position:absolute;left:50%;bottom:2px;width:82px;margin-left:-41px;height:16px;display:flex;background:#dcdee0}
.ticket .qty input{flex:1;text-align:center;background:#dcdee0;width:40px}
.ticket .qty button{width:15px;background:#fff;color:#333;border-left:1px solid #888}
.t-spx{left:4px;top:32px;width:253px;height:109px}
.t-dax{left:260px;top:88px;width:285px;height:123px}
.t-euro{left:4px;top:186px;width:253px;height:109px}
.t-us30{left:548px;top:18px;width:253px;height:109px}
.t-cac{left:548px;top:186px;width:253px;height:109px}
.t-ndaq{left:805px;top:88px;width:316px;height:151px}
.t-float{left:164px;top:340px;width:413px;height:180px}
.t-ndaq .nm,.t-float .nm{font-size:12px}
.t-ndaq .v,.t-ndaq .a,.t-ndaq .b,.t-ndaq .h{font-size:14px;line-height:24px}
.t-ndaq .p{font-size:34px}.t-ndaq .p small{font-size:26px}
.t-ndaq .sp{width:46px;margin-left:-23px;font-size:15px;line-height:22px}
.t-ndaq .qty{width:102px;margin-left:-51px}
.t-float .v,.t-float .a,.t-float .b,.t-float .h{font-size:18px;line-height:28px;padding:0 9px}
.t-float .p{font-size:42px}.t-float .p small{font-size:31px}
.t-float .sp{width:44px;margin-left:-22px;font-size:18px;line-height:28px}
.t-float .qty{width:134px;margin-left:-67px;height:18px}

/* desktop windows */
.desktop{flex:1;position:relative}
.window{position:absolute;display:flex;flex-direction:column;border:1px solid #333;border-radius:7px;overflow:hidden;background:#22252a}
.w-dax{left:35px;top:18px;width:945px;height:994px}
.w-ndaq{left:1005px;top:15px;width:902px;height:982px}
.title{display:flex;align-items:center;height:29px;background:#e8eaed;padding:0 16px 0 6px;gap:6px;color:#85888c;font:11px/29px "Open Sans",sans-serif}
.title>svg:first-child{width:14px;height:15px}
.title>.grow~svg{margin-left:28px}
.addr{display:flex;align-items:center;gap:12px;height:29px;background:#fff;padding-left:13px;border-top:1px solid #d5d7da;font:12px/28px "Open Sans",sans-serif;color:#5a5d61}
.addr svg{width:10px;height:12px}
.hostname{color:#202124}
.window .phead{height:31px;background:linear-gradient(#444850,#33363c);border-color:#111;color:#999;padding-right:2px;font-weight:700}
.window .phead .burger{border-color:#111;color:#666}
.window .ptab.on{background:#25292e;color:#fff;border-color:#111;font-weight:700}
.window .ptab i{color:#999;font-weight:400}
.window .chg{background:#25292e;color:#17e02c;font-weight:400}
.window .px button:first-child{background:#42331d;border-right:1px solid #000}
.window .px button+button{background:#1c3b45}
.window .px span{width:10px;left:69px;background:#222}
.window .px em{left:56px}.window .px em+em{left:81px}
.window .ctool{height:23px;background:#33363c;border-color:#111}
.window .ctool button{color:#fff;border-color:#111}
.window .ctool .s{color:#ff3}
.window .ctool svg{color:#aaa}
.window .foot{background:#33363c;border-color:#111;color:#888}
.window .foot button{border-color:#111}
.window .foot .wide{color:#fff}
.window .foot .lit{background:#003466;color:#fff}
```

FILE: app.js
```js
const ic = (n, c = 'i12') => `<svg class="${c}" aria-hidden="true"><use href="#i-${n}"/></svg>`;

/* ---- shared parts ---- */
const parts = {
  tabs(d) {
    const all = [['logo', 'CMC Markets', 'on']];
    if (d.tabs === 'full') all.push(['inv', 'Calendrier économique en temps'], ['pulse', 'Journal de Stochastic - Page 123'], ['pulse', 'File scalping et day trading du lu']);
    return ['tabs', all.map(t => `<div class="tab ${t[2] || ''}">${ic(t[0], 'i16')}<span>${t[1]}</span>${ic('x')}</div>`).join('') +
      `<button class="new" aria-label="Nouvel onglet">${ic('plus')}</button><span class="grow"></span><span class="ctl">${ic('down')}${ic('minus')}${ic('rest')}${ic('x')}</span>`];
  },
  url(d) {
    return ['url', ic('back', 'i16') + ic('fwd', 'i16') + ic('reload', 'i16') + ic('home', 'i16') +
      `<div class="omni">${ic('lock')}<input aria-label="Adresse" value="platform.cmcmarkets.com/#/app?b=CMC-CFD&amp;r=FR&amp;l=fr">${ic('key', 'i14')}${ic('share', 'i16')}${ic('staro', 'i16')}</div>` +
      `<div class="ext ${d.pill ? 'pill' : ''}">${ic('abp', 'i16')}${ic('ghost', 'i24')}${ic('puzzle', 'i16')}</div>${ic('dl', 'i16')}${ic('side', 'i16')}${ic('f', 'i22')}${ic('dots', 'dots')}`];
  },
  header(d) {
    const [kind, num] = d.sub.split(' ');
    const nav = d.nav.split('|').map(n => n[0] === '*' ? `<a href="#" class="on">${n.slice(1)}</a>` : `<a href="#">${n}</a>`).join('');
    const items = [['prod', 'Produits'], ['list', 'Liste de Favoris'], ['tag', 'Compte'], ['news', 'News &amp; Analyses'], ['scan', 'Scanner de motifs'], ['grad', 'Apprendre'], ['gear', 'Réglages'], ['win', 'Fenêtres']];
    const menu = items.map(([i, t]) => `<button class="${i === 'win' && !d.windows ? 'off' : ''}">${ic(i, 'i16')}${t}${i === 'tag' && d.variant === 'real' ? '<span class="badge">1</span>' : ''}</button>`).join('');
    const cta = d.action === 'fonds' ? `<button class="cta">${ic('wallet', 'i22')}<span>Ajouter<br>des Fonds</span></button>` : `<button class="cta real">${ic('adduser', 'i22')}<span>Ouvrir un<br>Compte Réel</span></button>`;
    return ['head', `<div class="me">${ic('user', 'i18')}</div><div class="brand">${ic('logo')}<div><b>CFD</b><small>${kind} <i>${num}</i></small></div></div>
      <button class="find" aria-label="Rechercher">${ic('search', 'i18')}</button><div class="mid"><nav class="nav">${nav}<span class="tail">${ic('plus')}${ic('mouse', 'i18')}</span></nav><div class="menu">${menu}</div></div>
      ${cta}<button class="recap">Afficher le Récap. du Compte</button><button class="fold" aria-label="Replier">${ic('chev', 'i10')}</button>
      <div class="clock"><time>11:38:40</time><button aria-label="Info">${ic('info', 'i18')}</button><button aria-label="Quitter">${ic('power', 'i16')}</button></div>`];
  },
  chart(d) {
    const q = d.quote.split('|'), s = l => (l ? l.split('|') : []).map(t => `<button class="s ${t.length > 2 ? 'm' : ''}">${t}</button>`).join('');
    const arrows = d.split ? '' : '<em>▲</em><em>▲</em>';
    return ['', `<header class="phead"><button class="burger" aria-label="Menu">${ic('burger')}</button><button class="ptab on"><i>${d.num}</i>${d.name}${ic('search', 'i14')}</button>${d.dark ? '' : ic('plus')}<span class="grow"></span>
      <div class="chg"><span>▲ ${q[0]}</span><span>${q[1]}</span></div><div class="px"><button>${q[2]}</button><button>${q[3]}</button>${arrows}<span>${q[4]}</span></div>${d.dark ? '' : '<span class="bars"></span>' + ic(d.split ? 'expand' : 'shrink') + ic('pop') + ic('x')}</header>
      <div class="ctool"><button class="doc" aria-label="Liste">${ic('doc', 'i16')}</button><button class="gr" aria-label="Grille">${ic(d.split ? 'split' : 'grid', 'i16')}</button><button class="per">${d.period}</button>${s(d.p)}<button class="span">${d.span}</button>${s(d.s)}
      <button class="mod">${ic('sliders', 'i14')}Modèles</button>${s(d.m)}<button class="side">${ic('candle', 'i14')}${d.side}</button><button class="lnk">${ic(d.dark ? 'eye' : 'link', 'i14')}Lié</button><span class="grow"></span><button class="set" aria-label="Paramètres">${ic('gearo', 'i16')}${d.settings}</button></div>`];
  },
  tools(d) {
    const a = [['line', 'Ligne De ...'], ['hline', 'Ligne S/r'], ['cours', 'Cours'], ['fixe', 'Fixe'], ['nb', 'Nb'], ['fib', 'Fibonacci'], ['rect', 'Rectangle'], ['oval', 'Ovale'], ['fleche', 'Flèche'], ['vague', 'Vague Mo...'], ['vagueco', 'Vague Co...']];
    if (d.set === 'b') { a[3] = ['fixey', 'Fixe']; a.splice(3, 0, ['fourch', 'Fourchett...']); a.splice(10, 0, ['cycle', 'Cycle']); }
    return ['tools', '<ul>' + a.map(([i, t]) => `<li><button aria-label="${t}"><svg class="i26"><use href="#t-${i}"/></svg></button>${t}</li>`).join('') + '<li class="none"><i></i></li>'.repeat(32 - a.length) + '</ul>'];
  },
  foot(d) {
    const b = (i, c = '', l = i) => `<button class="${c}" aria-label="${l}">${ic(i, 'i16')}</button>`;
    const w = d.short ? ['Période', 'Outils De Dessin'] : ['Période', 'Outils De Dessin', 'Indicateurs', 'Figures'];
    return ['foot', b('undo') + b('no') + b('pen', d.short ? '' : 'lit') + b('ud', 'lit') + `<span class="grow"></span><button class="wide fav edge ${d.live ? 'live' : ''}">Favoris${ic('star', 'i14')}</button>` +
      w.map(t => `<button class="wide">${t}</button>`).join('') + (d.short ? b('wave') + b('tri') : '') + '<span class="grow"></span>' + b('hfit', 'edge') + b('minus') + b('plus') + b('cross', 'lit') + b('vfit', 'lit')];
  },
  taskbar() {
    const k = n => `<button class="${n === 'chrome' ? 'cur' : ''}" aria-label="${n}"><svg class="i24"><use href="#k-${n}"/></svg></button>`;
    return ['taskbar', k('win') + `<button class="sq">${ic('search', 'i14')}Recherche</button>` + ['view', 'folder', 'set', 'snip', 'chrome', 'tv', 'eye', 'pc', 'chip', 'chipd', 'pc', 'chip', 'ibm'].map(k).join('') + '<p>11:37<br>20/03/2023</p>'];
  },
  popout() {
    return ['', `<div class="title">${ic('logo')}CMC Markets - Google Chrome<span class="grow"></span>${ic('minus')}${ic('max')}${ic('x')}</div><div class="addr">${ic('lock')}<span><span class="hostname">platform.cmcmarkets.com</span>/popout.html#/app?r=FR&amp;b=CMC-CFD</span></div>`];
  }
};
document.querySelectorAll('[data-part]').forEach(e => {
  const [cls, html] = parts[e.dataset.part](e.dataset);
  if (cls) e.className = cls;
  e.innerHTML = html;
});

/* ---- watch lists ---- */
const lists = {
  america: ['US SPX 500 - Juin 2023;3 896,73;3 978,48;-0 %;0,05;3 947,60;3 948,30<em class="dn">▼</em>', 'US NDAQ 100 - Juin 2023;12 518,00;12 750,75;+0,01 %;1,87;12 648,50;12 651,50', 'US 30 - Juin 2023;31 654,5;32 311,5; 0 %;0;32 055,0;32 059,0'],
  europe: ['Euro 50 - Juin 2023;3 913,0;4 057,3;+0,45 %;18;4 016,5;4 018,5', 'Allemagne 40 - Juin 2023;14 616,0;15 105,3;+0,33 %;49,95;14 974,0;14 976,0', 'France 40 - Avr 2023;6 803,5;6 970,8;+0,36 %;25,5;6 957,0;6 959,0'],
  asie: ['Japon 225;26 635,00;27 372,50;-0,08 %;22,6;26 937,50;26 952,50', 'Hong Kong 50;18 828,9;19 413,1;-0,94 %;182,2;19 045,3;19 050,3', 'Hong Kong Chine H-shares - Cash;6 405,2;6 606,4;-0,78 %;51,4;6 480,2;6 498,2', 'Chine A50 - Mar 2023;12 817,0;12 986,0;+0,19 %;24,5;12 879,5;12 889,5', 'Australie 200;6 825,56;6 979,68;+0,16 %;11,43;6 910,26;6 914,26'],
  divers: ['US Dollar Index - Juin 2023;103,240;103,653;-0,21 %;22,5;103,250;103,280', 'EUR/USD;1,06312;1,06975;+0,09 %;9,9;1,06950<em class="up">▲</em>;1,06957', 'Pétrole Brut Brent;70,191;73,824;-1,96 %;142,55;71,232;71,262', 'Volatility Index - Mar 2023;24,675;28,125;+0,77 %;0,2;25,825;25,925']
};
const sort = ic('sort', 'sort');
for (const [id, rows] of Object.entries(lists)) {
  const e = document.getElementById(id);
  e.innerHTML = `<header class="phead"><button class="burger" aria-label="Menu">${ic('burger')}</button><button class="ptab on">${e.dataset.list} ${ic('down')}${ic('zoomin', 'i16')}</button>${ic('plus')}<span class="grow"></span><span class="bars"></span>${ic('expand')}${ic('x')}</header>
  <table class="list"><colgroup><col><col class="c-n"><col class="c-n"><col class="c-p"><col class="c-q"><col class="c-q"></colgroup>
  <thead><tr><th>PRODUIT ${sort}</th><th>PLUS BAS ${sort}</th><th>PLUS HAUT ${sort}</th><th class="mid3">PERFORMANCE ${sort}</th><th class="sell">VENTE</th><th class="buy">ACHAT</th></tr></thead><tbody>` +
  rows.map(r => { const c = r.split(';'), s = c[3][0], k = s === '+' ? 'up' : s === '-' ? 'dn' : '', a = s === '+' ? '▲ ' : s === '-' ? '▼ ' : ''; return `<tr><td>${ic('row', 'i16')}${c[0]}</td><td>${c[1]}</td><td>${c[2]}</td><td><div class="${k}"><span>${a}${c[3].slice(1)}</span><span>${c[4]}</span></div></td><td>${c[5]}</td><td>${c[6]}</td></tr>`; }).join('') + '</tbody></table>';
}

/* ---- price tickets ---- */
const ticket = (cls, name, dir, pc, ch, sp, v, a, lo, hi, q) => {
  const p = s => { const [b, m] = s.split('_'); return `<span class="p">${b}<small>${m}</small></span>`; };
  return `<article class="ticket ${cls}"><header><button class="burger" aria-label="Menu">${ic('burger')}</button><button class="nm"><span>${name}</span>${ic('search', 'i14')}</button><span class="grow"></span><div class="chg ${dir === '▼' ? 'dn' : ch === '0' ? 'flat' : ''}"><span>${dir} ${pc}</span><span>${ch}</span></div><span class="bars"></span>${ic('x')}</header>
  <div class="body"><span class="v">VENDRE</span><span class="a">ACHETER</span>${p(v)}${p(a)}<span class="b">B:${lo}</span><span class="h">H:${hi}</span><span class="sp">${sp}</span><div class="qty"><input aria-label="Quantité" value="${q}"><button aria-label="Choisir">${ic('down', 'i10')}</button></div></div></article>`;
};
document.getElementById('canvas').insertAdjacentHTML('beforeend',
  ticket('t-spx', 'US SPX 500<br>Juin 2023', '▼', '0 %', '0,05', '7,0', '3947,6_0', '3948,3_0', '3 896,73', '3 978,48', '-') +
  ticket('t-dax', 'Allemagne 40<br>Juin 2023', '▲', '0,33 %', '49,95', '2,0', '14974,_0', '14976,_0', '14 616,0', '15 105,3', '0,01') +
  ticket('t-euro', 'Euro 50<br>Juin 2023', '▲', '0,45 %', '18', '2,0', '4016,_5', '4018,_5', '3 913,0', '4 057,3', '-') +
  ticket('t-us30', 'US 30<br>Juin 2023', '▲', '0 %', '0', '4,0', '32055,_0', '32059,_0', '31 654,5', '32 311,5', '-') +
  ticket('t-cac', 'France 40<br>Avr 2023', '▲', '0,36 %', '25,5', '2,0', '6957,_0', '6959,_0', '6 803,5', '6 970,8', '-') +
  ticket('t-ndaq', 'US NDAQ 100 - Juin 2023', '▲', '0,01 %', '1,87', '3,00', '12648,_50', '12651,_50', '12 518,00', '12 750,75', '0,02'));
document.getElementById('floating').innerHTML = ticket('t-float', 'Allemagne 40 - Juin 2023', '▲', '0,33 %', '49,95', '2,0', '14974,_0', '14976,_0', '14 616,0', '15 105,3', '0,01');

/* ---- chart drawing ---- */
function Plot(id, ox = 0, oy = 0, sx = 1, sy = 1) {
  let out = '';
  const X = v => +(ox + v * sx).toFixed(1), Y = v => +(oy + v * sy).toFixed(1);
  const add = s => { out += s; };
  return {
    line(y, x1, x2, c, w = 1, dash = '') { add(`<path d="M${X(x1)} ${Y(y)}H${X(x2)}" stroke="${c}" stroke-width="${w}" stroke-dasharray="${dash}"/>`); },
    seg(x1, y1, x2, y2, c = '#222', w = 2, dash = '5 5') { add(`<path d="M${X(x1)} ${Y(y1)}L${X(x2)} ${Y(y2)}" stroke="${c}" stroke-width="${w}" stroke-dasharray="${dash}"/>`); },
    poly(pts, c, w, dash = '') { add(`<polyline points="${pts.split(' ').map(p => { const [a, b] = p.split(','); return X(+a) + ',' + Y(+b); }).join(' ')}" fill="none" stroke="${c}" stroke-width="${w}" stroke-dasharray="${dash}" stroke-linejoin="round"/>`); },
    box(x1, y1, x2, y2, f, s = 'none', dash = '5 4') { add(`<rect x="${X(x1)}" y="${Y(y1)}" width="${(x2 - x1) * sx}" height="${(y2 - y1) * sy}" fill="${f}" stroke="${s}" stroke-dasharray="${dash}"/>`); },
    oval(cx, cy, rx, ry, f, s, dash) { add(`<ellipse cx="${cx}" cy="${cy}" rx="${rx}" ry="${ry}" fill="${f}" stroke="${s}" stroke-dasharray="${dash}"/>`); },
    text(x, y, t, c = '#222', o = '') { add(`<text x="${X(x)}" y="${Y(y) + 4}" fill="${c}" ${o}>${t}</text>`); },
    mid(x, y, t) { this.text(x, y, t, '#222', 'text-anchor="middle"'); },
    tag(x, y, t, bg, fg = '#222', w = 55) { add(`<rect x="${X(x)}" y="${Y(y) - 7.5}" width="${w}" height="15" rx="2" fill="${bg}"/><text x="${X(x) + 1}" y="${Y(y) + 4}" fill="${fg}">${t}</text>`); },
    big(x, y, w, h, t, bg, fs = 12) { add(`<rect x="${X(x)}" y="${Y(y) - h / 2}" width="${w}" height="${h}" rx="${h > 18 ? 3 : 0}" fill="${bg}"/><text x="${X(x) + (fs > 12 ? 2 : 6)}" y="${Y(y) + 4}" fill="#fff" font-weight="700" style="font-size:${fs}px">${t}</text>`); },
    pin(x, y) { add(`<path d="M${X(x) - 6} ${Y(y) + 14}v-8l6-6 6 6v8z" fill="#b5b5b5" stroke="#444"/>`); },
    raw: add,
    candles(x0, step, w, cols, data, wick = 1) {
      data.split(';').forEach((r, i) => {
        if (r === '') return;
        const c = cols[r[0]], [h, t, b, l] = r.slice(1).split(' ').map(Number), x = X(x0 + i * step);
        add(`<path stroke="${c}" stroke-width="${wick}" d="M${x} ${Y(h)}V${Y(l)}"/><rect fill="${c}" x="${(x - w / 2).toFixed(1)}" width="${w}" y="${Y(t)}" height="${Math.max(1, (b - t) * sy).toFixed(1)}"/>`);
      });
    },
    done() { document.getElementById(id).innerHTML = out; }
  };
}
const YEL = '#ffe92e', CY = '#00d9ff', RED = '#f00000', cyF = 'rgba(0,217,255,.1)', yeF = 'rgba(255,240,90,.15)';

/* Allemagne 40, 30 minutes */
{
  const p = Plot('dax30');
  p.box(0, 213, 1920, 215, '#ddd'); p.box(1845, 215, 1847, 939, '#ddd');
  [[245, '15 mars'], [676, '16 mars'], [1107, '17 mars'], [1519, '19 mars']].forEach(a => p.mid(a[0], 207, a[1]));
  [[320, '15 200,00'], [466, '15 000,00'], [612, '14 800,00'], [758, '14 600,00'], [903, '14 400,00']].forEach(a => p.text(1854, a[0], a[1]));
  p.candles(14.7, 9.373, 5, { g: '#5da30f', r: '#f2300f' }, 'g400 404 434 436;g390 397 405 410;r381 395 407 407;g312 327 405 450;g298 301 326 342;r272 299 302 312;g274 276 301 319;r268 276 315 319;g270 276 315 324;r269 276 297 300;r280 297 305 307;r291 305 325 337;r318 326 332 370;r314 333 337 344;g329 330 338 363;r327 330 341 345;r335 340 342 367;g295 298 341 347;r297 297 305 311;g290 298 305 305;r303 305 314 316;r314 314 318 319;g304 307 317 319;g305 307 308 316;r305 306 315 316;r303 310 313 315;g297 301 311 315;g296 298 301 312;g289 295 299 299;g285 290 296 296;r289 290 293 299;r291 293 294 300;r293 293 297 297;g293 294 296 301;r293 294 309 311;g306 307 308 315;g281 290 307 307;g281 285 290 297;r284 285 303 304;r303 304 315 327;r286 315 331 347;r315 331 353 357;r349 354 426 441;r404 427 471 487;r451 472 587 587;r531 586 625 687;g568 608 625 625;g572 596 608 608;r574 596 613 613;r564 613 635 645;g578 621 635 645;g562 620 622 622;g562 591 621 630;r585 590 597 648;r572 590 592 611;r578 591 597 611;r593 607 663 663;r635 663 671 678;g619 627 670 674;g609 616 628 652;g541 570 616 648;g541 550 570 575;r541 551 558 592;g548 550 558 592;r549 550 561 563;g558 558 560 562;g552 554 568 573;g549 549 554 557;r544 548 549 550;r548 550 568 574;g536 539 552 561;g478 482 539 551;r472 482 491 514;r472 492 496 502;g486 488 496 508;g476 481 489 490;r481 481 504 506;r498 503 507 516;g484 485 507 507;g472 474 484 484;r472 474 491 497;r475 491 496 496;r494 495 510 517;r493 511 512 518;r504 511 543 556;g488 497 543 543;r477 491 543 546;r519 542 578 579;r559 578 607 647;g573 594 606 606;g567 569 594 594;r568 569 586 592;r585 587 616 637;g590 592 616 616;r581 592 597 607;r583 597 627 650;r607 626 651 717;g539 539 652 666;r536 538 597 663;g504 510 597 611;g494 505 509 557;g452 474 504 526;g467 472 474 508;g448 452 472 500;r429 452 457 472;r456 457 466 481;g461 463 466 484;g443 446 463 478;g433 437 445 461;g425 427 437 451;r425 426 428 439;r430 433 436 443;r430 434 441 445;g430 433 441 445;g419 424 430 433;;r446 447 462 468;r458 461 463 466;g452 453 464 472;g452 452 453 465;g446 447 453 457;r446 447 453 453;g445 446 452 455;r446 446 448 451;g433 440 447 450;g433 435 438 444;r435 436 438 442;g428 430 437 437;r429 429 444 454;g425 426 444 455;r423 426 433 441;r422 432 434 437;g355 373 433 446;r368 373 409 419;r389 409 421 432;g400 418 421 431;r419 419 444 461;r435 444 450 466;r451 451 505 519;r495 505 507 528;r488 507 565 572;r550 565 616 626;g589 604 616 631;r592 604 618 631;r574 617 645 659;r641 645 670 678;g625 656 670 693;g630 638 656 674;g635 638 645 646;g605 627 629 638;r619 626 629 637;g615 620 626 630;r613 620 647 649;g620 620 647 647;g591 599 619 626;r599 599 625 630;r619 624 625 631;r630 630 637 637;g585 586 606 616;g556 585 586 594;r579 585 590 594;g564 570 590 590;r510 522 524 533;r519 523 526 532;r526 527 554 556;r554 554 595 602;r592 597 602 604;g598 598 601 601;r598 598 640 640;g635 640 641 655;r637 645 646 654;r645 645 663 664;g652 660 662 673;r656 661 685 687;r671 684 734 737;r731 732 771 825;g718 745 771 789;g685 685 745 781;r682 683 783 783;g692 693 783 794;r673 692 705 712;g621 633 705 705;g610 610 633 633;g592 599 611 625');
  p.box(164, 285, 380, 317, yeF, YEL);
  p.box(-2, 373, 14, 410, cyF, CY); p.box(33, 383, 427, 407, cyF, CY); p.box(-2, 434, 418, 458, cyF, CY); p.box(-2, 489, 427, 534, cyF, CY);
  p.box(446, 481, 999, 717, yeF, YEL); p.box(437, 568, 502, 635, 'rgba(255,235,50,.35)', YEL);
  p.box(539, 650, 914, 691, cyF, CY); p.box(923, 595, 1364, 660, cyF, CY); p.box(-2, 819, 1720, 881, cyF, CY);
  p.oval(549, 670, 18, 56, 'rgba(255,0,0,.1)', RED, '5 3'); p.oval(923, 669, 9, 63, 'rgba(255,0,0,.1)', RED, '5 3');
  p.seg(448, 644, 502, 628);
  p.line(250, 0, 1846, '#0057ff', 2);
  [[285, 0, 1486], [371, 118, 428], [451, 33, 437], [428.5, 699, 1045], [353.5, 1167, 1400], [515, 1458, 1588], [688, 371, 533], [916, 0, 1846]].forEach(a => p.line(a[0], a[1], a[2], YEL, 2, '2 1'));
  [298.5, 406, 513, 644.5].forEach(y => p.line(y, 0, 1839, RED, 2, '2 1'));
  p.line(599.5, 0, 1847, '#e00', 1.5); p.line(637.5, 82, 1847, RED, 1, '3 1'); p.line(860, 0, 1839, RED, 2);
  [[290, '(61,80 %)'], [397, '(50,00 %)'], [504, '(38,20 %)'], [636, '(23,60 %)'], [850, '(0,00 %)']].forEach(a => p.text(4, a[0], a[1], '#e02a35'));
  p.text(0, 639, '52,17 / 0,35 %', '#e02a35');
  p.tag(0, 423.5, '5 057,79', YEL, '#222', 46); p.tag(-2, 443, '31,79', YEL, '#222', 28); p.tag(-2, 457, '1,98', YEL, '#222', 28);
  [[1488, 283.5, '15 247,92'], [429, 370.5, '15 131,08'], [439, 450.5, '15 021,39'], [1048, 428, '15 050,25'], [1403, 353, '15 153,70'], [1591, 514.5, '14 933,24'], [532, 687, '14 695,11'], [1848, 915.5, '14 382,62']].forEach(a => p.tag(a[0], a[1], a[2], YEL));
  p.tag(1848, 248.5, '15 296,06', '#0057ff', '#001');
  [[297.5, '15 229,77'], [405, '15 082,82'], [512, '14 935,86'], [645, '14 754,05'], [860, '14 460,11']].forEach(a => p.tag(1839, a[0], a[1], 'red', '#fff'));
  p.big(1847, 598, 73, 22, '14 817,59', '#00b000', 13); p.big(1847, 637, 73, 17, '14 765,42', 'red');
  p.pin(1739, 213); p.done();
}

/* Allemagne 40, 10 secondes */
{
  const p = Plot('dax10s'), sand = '#d9c8b7';
  p.box(0, 1208, 1920, 1222, sand); p.box(0, 1222, 1848, 1224, '#ddd'); p.box(1848, 1222, 1920, 2068, sand); p.box(0, 2065, 1920, 2068, sand);
  [[226, '11:05'], [446, '11:10'], [832, '11:20'], [1052, '11:25'], [1270, '11:30'], [1489, '11:35'], [1708, '11:40']].forEach(a => p.mid(a[0], 1215, a[1]));
  [[1281, '14 840,00'], [1396, '14 830,00'], [1512, '14 820,00'], [1628, '14 810,00'], [1744, '14 800,00'], [1861, '14 790,00'], [1976, '14 780,00']].forEach(a => p.text(1855, a[0], a[1]));
  p.candles(121.2, 7.302, 3, { c: '#1fcad3', o: '#f39c12', k: '#111' }, 'c2060 2060 2065 2065;;c1996 1996 2065 2065;o1996 1996 2059 2065;c2041 2041 2059 2065;o2014 2040 2041 2065;o2041 2041 2065 2065;;;c1927 1943 2065 2065;o1904 1904 1948 1948;c1903 1903 1949 1973;o1903 1903 1908 1908;o1904 1914 1972 1972;c1754 1754 1972 2007;c1749 1749 1754 1754;o1721 1748 1749 1795;c1733 1733 1749 1801;c1630 1636 1733 1733;o1494 1636 1676 1676;c1631 1647 1676 1706;o1647 1647 1722 1722;c1654 1700 1722 1740;c1591 1607 1700 1727;c1574 1601 1607 1607;c1550 1550 1601 1601;c1483 1516 1550 1562;c1471 1476 1516 1540;c1391 1402 1476 1493;o1391 1402 1436 1436;o1424 1436 1482 1493;c1374 1390 1482 1505;o1385 1390 1470 1493;c1448 1464 1470 1517;o1459 1464 1515 1515;o1493 1515 1526 1538;o1526 1526 1548 1612;c1474 1474 1548 1561;c1386 1388 1474 1480;o1388 1388 1456 1462;c1377 1433 1456 1469;c1429 1432 1433 1490;o1433 1433 1536 1547;c1490 1500 1536 1536;c1432 1432 1500 1500;o1386 1432 1438 1443;o1438 1438 1500 1511;c1456 1460 1500 1512;o1444 1460 1511 1511;c1352 1374 1511 1541;o1364 1374 1420 1420;c1370 1374 1420 1427;o1374 1374 1420 1432;c1370 1374 1420 1420;o1375 1375 1432 1432;o1432 1432 1511 1511;c1461 1466 1511 1511;c1425 1425 1466 1518;c1409 1420 1425 1444;o1409 1419 1420 1460;o1410 1419 1420 1454;o1392 1420 1431 1460;o1421 1431 1500 1500;o1495 1500 1568 1580;c1494 1522 1568 1575;o1471 1522 1533 1545;o1510 1533 1555 1555;c1532 1532 1555 1596;o1521 1532 1555 1566;c1531 1543 1555 1578;c1451 1451 1543 1555;o1451 1451 1524 1524;o1524 1524 1609 1609;c1552 1563 1609 1620;c1472 1483 1563 1563;o1455 1483 1505 1540;o1495 1505 1517 1534;c1483 1483 1517 1517;c1460 1460 1483 1507;o1460 1460 1511 1517;c1472 1481 1511 1511;o1464 1481 1504 1515;c1395 1395 1504 1504;o1395 1395 1470 1470;o1436 1470 1492 1504;c1482 1487 1492 1510;o1482 1487 1618 1618;o1579 1617 1620 1630;o1606 1618 1629 1662;o1596 1629 1663 1672;o1663 1674 1675 1686;o1641 1674 1675 1693;o1675 1675 1697 1697;c1627 1628 1697 1697;o1627 1629 1685 1726;o1685 1685 1760 1760;c1645 1645 1760 1760;c1623 1644 1645 1658;c1617 1632 1644 1644;c1588 1593 1640 1640;o1593 1593 1639 1639;o1639 1639 1673 1685;o1673 1673 1753 1753;o1744 1753 1764 1776;c1744 1752 1764 1764;o1730 1752 1832 1838;o1832 1832 1883 1905;o1883 1883 1889 1889;o1867 1889 1900 1917;k1873 1900 1901 1911;c1832 1832 1900 1900;c1810 1819 1832 1849;o1787 1819 1878 1884;c1855 1855 1878 1878;c1787 1792 1855 1855;c1694 1706 1792 1792;o1706 1706 1752 1752;c1729 1729 1752 1776;c1649 1672 1729 1729;o1661 1672 1757 1757;c1707 1723 1757 1776;o1718 1723 1728 1734;c1661 1671 1728 1728;c1615 1637 1671 1683;o1636 1636 1637 1637;o1637 1637 1719 1719;o1684 1719 1752 1752;o1752 1752 1774 1785;c1716 1716 1774 1774;c1671 1676 1716 1716;o1676 1676 1683 1711;k1693 1693 1694 1694;o1683 1693 1705 1715;o1683 1703 1704 1704;c1699 1699 1704 1704;c1660 1670 1704 1704;c1623 1636 1670 1670;o1624 1636 1647 1687;o1636 1636 1660 1681;o1660 1660 1681 1681;o1681 1681 1716 1716;o1711 1716 1727 1739;c1671 1682 1727 1727;c1647 1663 1682 1682;c1648 1659 1663 1663;c1624 1629 1659 1671;o1620 1629 1636 1636;o1636 1636 1716 1750;c1646 1655 1716 1716;c1636 1648 1658 1671;c1631 1647 1658 1681;o1631 1658 1659 1681;o1659 1659 1705 1710;o1694 1705 1716 1716;o1716 1716 1718 1762;o1715 1715 1824 1824;c1783 1806 1824 1824;o1806 1806 1863 1863;o1863 1863 1897 1903;c1839 1851 1897 1927;o1851 1851 1863 1863;c1782 1782 1863 1863;k1708 1782 1783 1795;o1782 1782 1809 1809;o1805 1809 1896 1896;o1874 1896 1918 1930;c1872 1872 1918 1918;c1792 1792 1872 1872;c1748 1751 1792 1804;c1724 1747 1751 1751;c1713 1752 1753 1753;c1714 1714 1753 1753;o1708 1714 1754 1754;o1754 1754 1794 1794;c1713 1713 1794 1806;o1709 1713 1782 1782;c1749 1769 1782 1782;c1750 1759 1769 1782;o1754 1759 1793 1793;c1725 1747 1793 1793;c1702 1713 1747 1747;o1713 1713 1724 1734;o1724 1724 1816 1816;c1747 1747 1816 1816;o1747 1747 1817 1817;c1736 1736 1817 1817;c1686 1707 1736 1736;o1707 1707 1771 1771;c1611 1622 1771 1783;c1554 1565 1620 1620;c1543 1553 1565 1612;o1553 1553 1588 1599;c1566 1582 1588 1606;o1537 1582 1593 1593;c1548 1553 1593 1612;c1445 1473 1553 1553;o1445 1473 1530 1530;c1474 1525 1530 1530;c1428 1439 1525 1543;o1434 1439 1450 1462;c1428 1439 1450 1486;k1422 1439 1440 1440;o1439 1439 1450 1473;k1416 1450 1451 1456;o1450 1450 1530 1530;o1485 1530 1553 1564;c1519 1542 1553 1565');
  const gr = 'rgba(120,120,120,.09)';
  p.oval(449.5, 1485, 306, 148, gr, '#bbb', '2 2'); p.oval(1234, 1803, 507, 163, gr, '#bbb', '2 2');
  p.box(224, 1363, 727, 1606, yeF, YEL, '6 4'); p.box(698, 1378, 1698, 1506, cyF, CY); p.box(195, 1914, 1581, 1999, cyF, CY); p.box(-2, 1870, 143, 2070, yeF, YEL);
  p.oval(905, 1880, 47, 72, 'rgba(255,0,0,.14)', RED, '3 3'); p.oval(1325, 1886, 30, 71, 'rgba(255,0,0,.14)', RED, '3 3');
  p.line(1541.5, 0, 1848, '#e01515', 1);
  [[1366, 253, 1771], [1613, 1012, 1646], [1708, 1296, 1574], [1851.5, 0, 312], [1912, 844, 1655], [1941, 1194, 1764]].forEach(a => p.line(a[0], a[1], a[2], YEL, 2, '2 1'));
  p.line(1744, 413, 1842, '#000', 2.5);
  [[692, 1340, 1442, 1739], [720, 1363, 944, 1782], [625, 1447, 850, 1866], [470, 1585, 241, 2065], [355, 1623, 690, 1616], [778, 1770, 842, 1765], [564, 2065, 1373, 1519], [1320, 1956, 1665, 1677]].forEach(a => p.seg(...a));
  [[1772, 1365, '14 832,66'], [1648, 1612, '14 811,34'], [1574, 1707, '14 803,22'], [313, 1851, '14 790,79'], [1656, 1911, '14 785,57'], [1765, 1940, '14 783,06']].forEach(a => p.tag(a[0], a[1], a[2], YEL));
  p.tag(1842, 1743, '14 800,08', '#000', '#fff');
  p.big(1848, 1437, 72, 18, '14 826,34', '#111'); p.big(1848, 1540, 72, 22, '14 817,59', '#00b000', 13);
  p.raw('<rect x="1721" y="1209" width="127" height="13"/><text x="1723" y="1219" fill="#fff">20 mars 2023 11:45:10</text><path fill="red" d="M1552 1664l13-14-5-2 15-5-3 15-3-4-12 14z"/>');
  p.pin(1632, 1222); p.done();
}

/* Allemagne 40 - Juin 2023, 1 jour */
{
  const p = Plot('day'), col = { g: '#00b400', r: '#f00' };
  p.box(3079, 196, 3456, 198, '#ddd'); p.box(3382, 198, 3384, 829, '#ddd');
  [[3190, '13 mars'], [3256, '20 mars'], [3335, '26 mars']].forEach(a => p.mid(a[0], 188, a[1]));
  [[269, '15 800,0'], [358, '15 600,0'], [446, '15 400,0'], [534, '15 200,0'], [621, '15 000,0'], [711, '14 800,0'], [799, '14 600,0']].forEach(a => p.text(3389, a[0], a[1]));
  'g262 264 375 390;g242 256 274 284;r229 257 306 314;g247 249 305 327;r248 248 324 334;r325 327 414 425;r321 402 562 601;g429 443 561 591;r435 445 606 687;g526 527 613 704;r484 527 655 687;g577 634 635 792'.split(';').forEach((c, i) => p.candles([3086, 3099, 3114, 3127, 3140, 3152, 3165, 3178, 3191, 3204, 3219, 3232][i], 0, 9, col, c));
  p.line(633.5, 3079, 3382, '#e00'); p.line(655.5, 3154, 3382, 'red', 1, '3 1'); p.text(3080, 657, '49,6 / 0,33 %', '#e22');
  p.text(3099, 809, '1 Jour', '#888');
  p.big(3382, 632, 74, 22, '14 976,0', '#00b000', 13); p.big(3382, 655, 74, 17, '14 926,4', 'red');
  p.pin(3244, 196); p.done();
}

/* Allemagne 40 - Juin 2023, 1 heure */
{
  const p = Plot('hour');
  p.box(3460, 196, 3840, 198, '#ddd'); p.box(3762, 198, 3764, 832, '#ddd');
  [[3535, '14 mars'], [3585, '15 mars'], [3636, '16 mars'], [3686, '17 mars'], [3734, '19 mars']].forEach(a => p.mid(a[0], 189, a[1]));
  [[277, '15 600,0'], [382, '15 400,0'], [486, '15 200,0'], [589, '15 000,0'], [695, '14 800,0'], [799, '14 600,0']].forEach(a => p.text(3770, a[0], a[1]));
  '809 271 298 g;813 268 293 r;817 247 283 g;823 245 257 r;827 255 269 r;831 258 274 g;835 245 264 g;839 249 297 r;843 263 441 r;849 425 553 r;853 448 512 g;857 435 515 r;861 470 551 r;865 481 566 g;871 482 551 r;875 475 520 g;879 476 536 r;884 499 540 g;888 488 512 g;894 496 531 r;898 513 531 g;902 509 531 r;906 510 529 g;910 508 525 g;914 504 528 g;920 497 517 g;924 491 509 g;928 487 500 g;932 484 508 r;936 499 552 r;942 495 532 g;946 470 536 g;950 475 523 g;954 482 507 g;958 450 488 g;964 395 483 g;968 367 415 g;972 363 398 r;976 361 402 g;980 370 409 r;984 393 432 r;990 401 425 r;994 378 430 g;998 376 391 g;1002 376 385 g;1006 376 379 r;1012 382 391 r;1016 378 393 g;1020 372 382 g;1024 375 378 r;1028 377 380 r;1034 379 391 r;1038 369 386 g;1042 372 401 r;1046 375 425 r;1050 419 518 r;1054 492 667 r;1060 577 626 g;1064 577 635 r;1068 577 636 g;1072 578 641 g;1076 585 615 r;1083 600 662 r;1087 612 659 g;1091 562 637 g;1095 565 602 g;1099 570 580 r;1105 563 582 g;1109 563 584 r;1113 516 578 g;1117 512 537 r;1121 513 537 g;1127 520 543 r;1131 513 537 g;1135 513 530 r;1139 528 548 r;1143 523 575 g;1147 516 589 r;1153 575 637 r;1157 582 628 g;1161 573 638 r;1165 589 638 r;1169 559 688 g;1175 533 652 g;1179 497 574 g;1183 493 527 g;1187 479 518 r;1191 490 519 g;1197 476 502 g;1201 478 500 r;1205 475 495 g;1209 469 484 r;1213 490 505 r;1217 496 508 g;1223 490 498 k;1227 487 496 g;1231 480 494 g;1235 477 493 g;1239 475 497 g;1245 475 487 r;1249 426 492 g;1253 452 484 r;1257 474 508 r;1261 498 551 r;1267 523 620 r;1271 594 630 r;1276 585 665 r;1280 620 669 g;1284 611 640 g;1288 606 627 r;1294 612 645 r;1298 595 628 r;1302 615 632 r;1306 569 617 g;1310 575 603 g;1316 536 585 r;1320 551 602 r;1324 593 608 r;1328 602 642 r;1332 630 656 r;1338 637 665 r;1342 655 765 r;1346 660 740 g;1350 646 789 r;1354 610 685 g;1358 594 642 g'.split(';').forEach(s => { const [x, a, b, c] = s.split(' '); p.raw(`<path stroke="${{ g: '#00a800', r: '#e00', k: '#111' }[c]}" d="M${(3060 + x * .4974).toFixed(1)} ${a}V${b}"/>`); });
  p.line(603.5, 3460, 3762, '#e00'); p.line(629.5, 3535, 3762, 'red', 1, '3 1'); p.text(3461, 631, '49,6 / 0,33 %', '#e22');
  p.text(3479, 809, '1 heure', '#888');
  p.big(3763, 602, 75, 22, '14 976,0', '#00b000', 13); p.big(3763, 629, 75, 17, '14 926,4', 'red');
  p.pin(3738, 196); p.done();
}

const neon = { c: '#0fe0dc', o: '#f39c1c', k: '#000' }, OR = '#ffa000', GR = '#008000';
/* Allemagne 40, 1 minute */
{
  const p = Plot('dax1m', 1940, 1090, .625, .6824), g = '#d6dad4';
  p.box(25, 180, 1536, 202, g); p.box(1419, 180, 1536, 1440, g);
  p.line(508, 26, 1419, '#999'); p.raw('<path stroke="#999" d="M2286.500 1228V2071"/>');
  [[310, '10:00'], [963, '11:00'], [1291, '11:30']].forEach(a => p.mid(a[0], 190, a[1]));
  [358, 545, 732, 919, 1106, 1293].forEach((y, i) => p.text(1432, y, ['14 900,00', '14 850,00', '14 800,00', '14 750,00', '14 700,00', '14 650,00'][i]));
  p.line(462, 26, 1419, GR, 3, '5 5'); p.line(853, 26, 1419, OR, 3, '2 2'); p.line(1066, 26, 1419, OR, 2, '2 1'); p.line(1139, 26, 1419, GR, 3, '2 1'); p.line(1179, 26, 1419, CY, 2, '2 1'); p.line(1265, 26, 1419, OR, 3, '2 1');
  p.candles(32, 10.884, 4, neon, 'c1433 1433 1436 1436;c1433 1433 1436 1436;c1382 1410 1436 1436;c1358 1387 1435 1435;c1345 1380 1412 1412;c1310 1342 1380 1382;c1273 1338 1370 1383;o1355 1356 1415 1433;o1370 1384 1424 1436;o1380 1408 1420 1436;c1385 1403 1425 1430;c1296 1338 1412 1412;c1327 1360 1370 1410;c1305 1337 1365 1390;c1246 1290 1350 1350;o1288 1318 1342 1380;o1318 1325 1382 1398;o1307 1350 1354 1400;c1223 1270 1353 1380;c1216 1243 1313 1325;c1210 1222 1275 1300;c1162 1195 1250 1250;c1143 1162 1223 1223;c1023 1092 1193 1193;c1004 1038 1142 1142;c941 992 1093 1093;c941 971 1028 1040;o980 997 1005 1035;c956 980 1003 1018;c880 893 990 990;c790 856 954 954;c837 880 905 910;o884 893 908 937;o896 902 960 1018;o903 915 975 1013;o944 945 1027 1047;o985 986 1055 1078;o1005 1018 1060 1075;o1037 1066 1097 1123;o1060 1075 1102 1130;o1073 1088 1103 1118;o1083 1102 1112 1137;o1097 1102 1145 1187;o1080 1118 1133 1172;c1080 1100 1123 1155;c1078 1097 1115 1130;c1011 1070 1100 1110;c1055 1070 1082 1098;o1076 1080 1097 1110;o1088 1090 1160 1175;o1117 1118 1175 1200;o1140 1145 1216 1244;o1180 1180 1210 1237;c1065 1138 1196 1200;c1055 1107 1175 1175;c1027 1053 1140 1140;c972 1018 1095 1100;c977 1005 1033 1088;c975 1007 1030 1045;o1015 1018 1058 1077;c1013 1038 1055 1105;c960 995 1045 1045;c960 977 1018 1025;c935 935 997 1005;c847 905 967 970;c852 873 937 940;o868 887 902 922;o878 897 900 915;o880 897 909 957;c852 877 905 908;c845 862 895 920;c825 855 862 882;c795 820 858 862;c763 788 842 850;o783 808 815 850;o810 812 852 870;o840 845 863 878;o850 860 872 885;c832 860 865 890;c830 858 862 885;c823 850 858 882;c768 805 853 855;c778 808 832 865;o820 825 860 885;o840 850 882 905;c855 865 882 932;c832 848 872 880;c780 833 850 860;c722 758 833 833;c652 703 795 795;c615 655 748 748;c610 640 683 708;c612 645 660 683;c612 633 655 677;c605 627 643 675;c610 623 638 665;o618 630 642 655;c620 640 648 710;c597 620 640 680;o630 633 638 665;o622 633 640 670;o612 633 680 695;o645 648 702 710;o672 675 705 740;o675 685 730 765;o712 713 768 783;c703 738 742 775;c688 703 740 745;c700 708 715 740;c692 705 715 735;c692 700 708 720;c685 700 708 730;o688 703 708 735;o705 708 755 783;o712 720 765 790;o722 740 748 772;c718 738 745 752;o715 738 745 752;c665 710 740 752;c633 660 722 725;c625 648 692 695;c623 648 668 670');
  p.poly('140,1433 160,1408 185,1382 210,1378 240,1335 270,1275 300,1190 330,1100 360,1030 390,996 415,1002 440,1025 460,1045 485,1075 510,1082 545,1078 565,1092 585,1125 605,1138 630,1115 660,1078 690,1065 710,1040 740,985 770,955 800,925 830,880 850,870 880,870 900,862 920,848 950,862 970,855 990,830 1005,790 1030,745 1060,700 1090,680 1120,665 1150,672 1180,702 1245,700 1270,720 1310,728 1348,695', '#f00', 2, '5 3');
  p.poly('217,1436 260,1390 300,1320 335,1265 365,1205 390,1170 430,1145 480,1137 510,1135 545,1124 570,1128 605,1140 630,1130 660,1112 685,1105 710,1088 740,1058 780,1025 825,977 860,955 895,940 925,920 960,914 990,890 1020,852 1060,808 1090,782 1120,760 1155,751 1175,753 1210,745 1250,738 1305,741 1348,722', '#000', 2);
  p.line(646, 26, 1419, CY, 2); p.line(662, 26, 1419, '#f21b0c'); p.line(862, 155, 1419, '#e00', 1, '3 1');
  p.text(26, 864, '53,37 / 0,36 %', '#e22');
  const big = 'style="font-size:13px"';
  [[34, 'O:', 61, '14 707,05'], [170, 'H:', 197, '14 716,24'], [307, 'L:', 333, '14 691,14'], [442, 'C:', 469, '14 703,08']].forEach(a => { p.text(a[0], 225, a[1], '#111', big); p.text(a[2], 225, a[3], '#f39c1c', big); });
  [[256, 'MME (13, 0)', 'red', 193], [284, 'MME (34, 0)', '#111', 193], [312, 'Pts Pivot', '#111', 167]].forEach(([y, t, c, r]) => { [[34, 56], [60, 82], [84, r]].forEach(b => p.box(b[0], y - 10, b[1], y + 10, '#fff', '#222', '')); p.text(85, y, t, c); p.seg(39, y - 5, 51, y + 6, c, 1.5, ''); p.seg(51, y - 5, 39, y + 6, c, 1.5, ''); p.line(y + 5, 64, 78, c, 2); });
  p.tag(1422, 643, '14 823,14', CY, '#024', 57); p.tag(1422, 851, '14 767,43', OR, '#222', 57); p.tag(1422, 462, '14 872,12', GR, '#fff', 57); p.tag(1422, 1066, '14 710,82', OR, '#222', 57); p.tag(1422, 1137, '14 691,49', GR, '#fff', 57); p.tag(1422, 1178, '14 680,69', CY, '#024', 57); p.tag(1422, 1265, '14 657,50', OR, '#222', 57);
  p.big(1419, 506, 72, 18, '14 859,70', '#111'); p.big(1419, 660, 72, 23, '14 818,79', '#00b000', 13); p.big(1419, 861, 72, 17, '14 765,42', 'red');
  p.raw('<rect x="2223" y="1213" width="127" height="13"/><text x="2225" y="1223" fill="#fff">20 mars 2023 10:25:00</text>');
  p.pin(1360, 200); p.done();
}

/* US NDAQ 100, 5 minutes */
{
  const p = Plot('ndaq5m', 2900, 1090, .5995, .6824);
  p.box(42, 194, 1548, 197, '#ddd'); p.box(1423, 197, 1426, 1420, '#ddd');
  ['03:00', '04:00', '05:00', '06:00', '07:00', '08:00', '09:00', '10:00', '11:00'].forEach((t, i) => p.mid(247 + i * 133.5, 184, t));
  [250, 409, 568, 726, 884, 1042, 1202, 1360].forEach((y, i) => p.text(1438, y, `12 ${600 - i * 30},00`));
  p.line(268, 43, 1423, OR, 2, '2 1'); p.line(532, 43, 1423, GR, 3, '5 4'); p.line(660, 43, 1423, OR, 3, '2 1'); p.line(1009, 43, 1423, CY, 2, '2 1'); p.line(1081, 43, 1423, GR, 3, '2 1'); p.line(1209, 43, 1423, GR, 2);
  p.line(635, 43, 1423, '#555'); p.line(670, 168, 1423, '#e00', 1, '3 1'); p.text(44, 672, '6,76 / 0,05 %', '#e22');
  p.candles(49, 11.144, 3, neon, 'o295 296 330 350;o325 330 355 378;c325 345 355 375;o350 350 430 440;c400 425 430 447;c407 425 428 455;c408 425 430 440;c397 398 428 443;o382 398 405 415;o390 403 420 445;o410 420 507 510;c503 504 506 560;o482 508 517 530;o510 517 610 622;c520 523 613 620;c477 492 525 535;c473 475 492 500;o465 472 503 517;c475 487 503 515;o485 487 515 520;c487 492 515 520;o488 490 542 545;c480 492 540 553;c450 465 495 505;o435 463 465 480;c437 440 465 473;c435 437 442 470;o432 437 467 470;o455 457 492 495;c450 450 490 492;o447 450 502 512;o462 488 500 513;o475 487 525 535;o505 525 570 573;c503 507 567 567;o503 507 525 535;o520 523 527 550;o520 523 540 545;o535 537 557 585;o550 553 570 573;c540 547 570 580;c513 520 548 550;c492 513 520 525;c510 514 517 520;o510 512 527 540;o523 527 540 560;o535 538 713 713;c645 655 716 716;c635 645 652 668;o640 643 660 692;c593 605 663 663;o600 603 607 635;c585 603 612 625;c550 575 603 615;o567 575 615 618;o605 612 617 618;o575 592 617 618;c577 577 597 600;o550 577 617 618;o585 615 618 622;o595 618 630 655;o617 625 655 657;c597 630 655 665;c600 627 632 650;c600 610 630 640;o597 610 613 640;o610 613 655 657;o647 657 790 828;o772 788 885 885;o860 885 965 972;o878 967 1012 1012;o980 1010 1118 1125;o1075 1120 1180 1193;c1090 1118 1178 1257;c1040 1053 1117 1120;c960 995 1047 1057;o990 998 1003 1020;c930 942 1007 1043;o887 940 943 945;o937 942 998 1008;o960 995 1027 1080;o1010 1027 1122 1182;o1070 1122 1157 1170;c1067 1092 1157 1177;k1068 1097 1100 1147;c1040 1058 1093 1105;c950 980 1060 1070;c872 913 975 975;o877 913 925 1003;o913 915 1075 1080;o1018 1073 1305 1307;c1205 1242 1303 1317;c1127 1190 1247 1250;c1140 1147 1192 1222;c957 977 1148 1172;o907 977 1000 1007;c935 977 1002 1005;c877 935 985 985;c827 835 935 935;c738 767 833 833;c663 692 743 755;o680 692 837 843;o830 838 882 907;c793 867 880 880;c830 845 868 920;c617 630 847 857;o630 632 700 710;o652 700 717 740;c640 672 720 740;o612 670 690 712;c597 633 670 672;o622 635 662 732;c513 520 660 685;o520 522 560 595;o555 565 672 680;c642 653 672 708;o622 653 668 670;c630 655 670 717;c612 635 655 675');
  p.tag(1428, 267, '12 596,82', OR); p.tag(1428, 531, '12 546,76', GR, '#fff'); p.tag(1428, 658, '12 522,74', OR); p.tag(1428, 1008, '12 456,39', CY, '#024'); p.tag(1428, 1080, '12 442,95', GR, '#fff'); p.tag(1428, 1208, '12 418,64', GR, '#fff');
  p.big(1425, 714, 72, 18, '12 511,78', '#111'); p.big(1425, 633, 72, 22, '12 527,47', '#00b000', 13); p.big(1425, 669, 72, 17, '12 520,71', 'red');
  p.pin(1375, 194); p.done();
}
```
